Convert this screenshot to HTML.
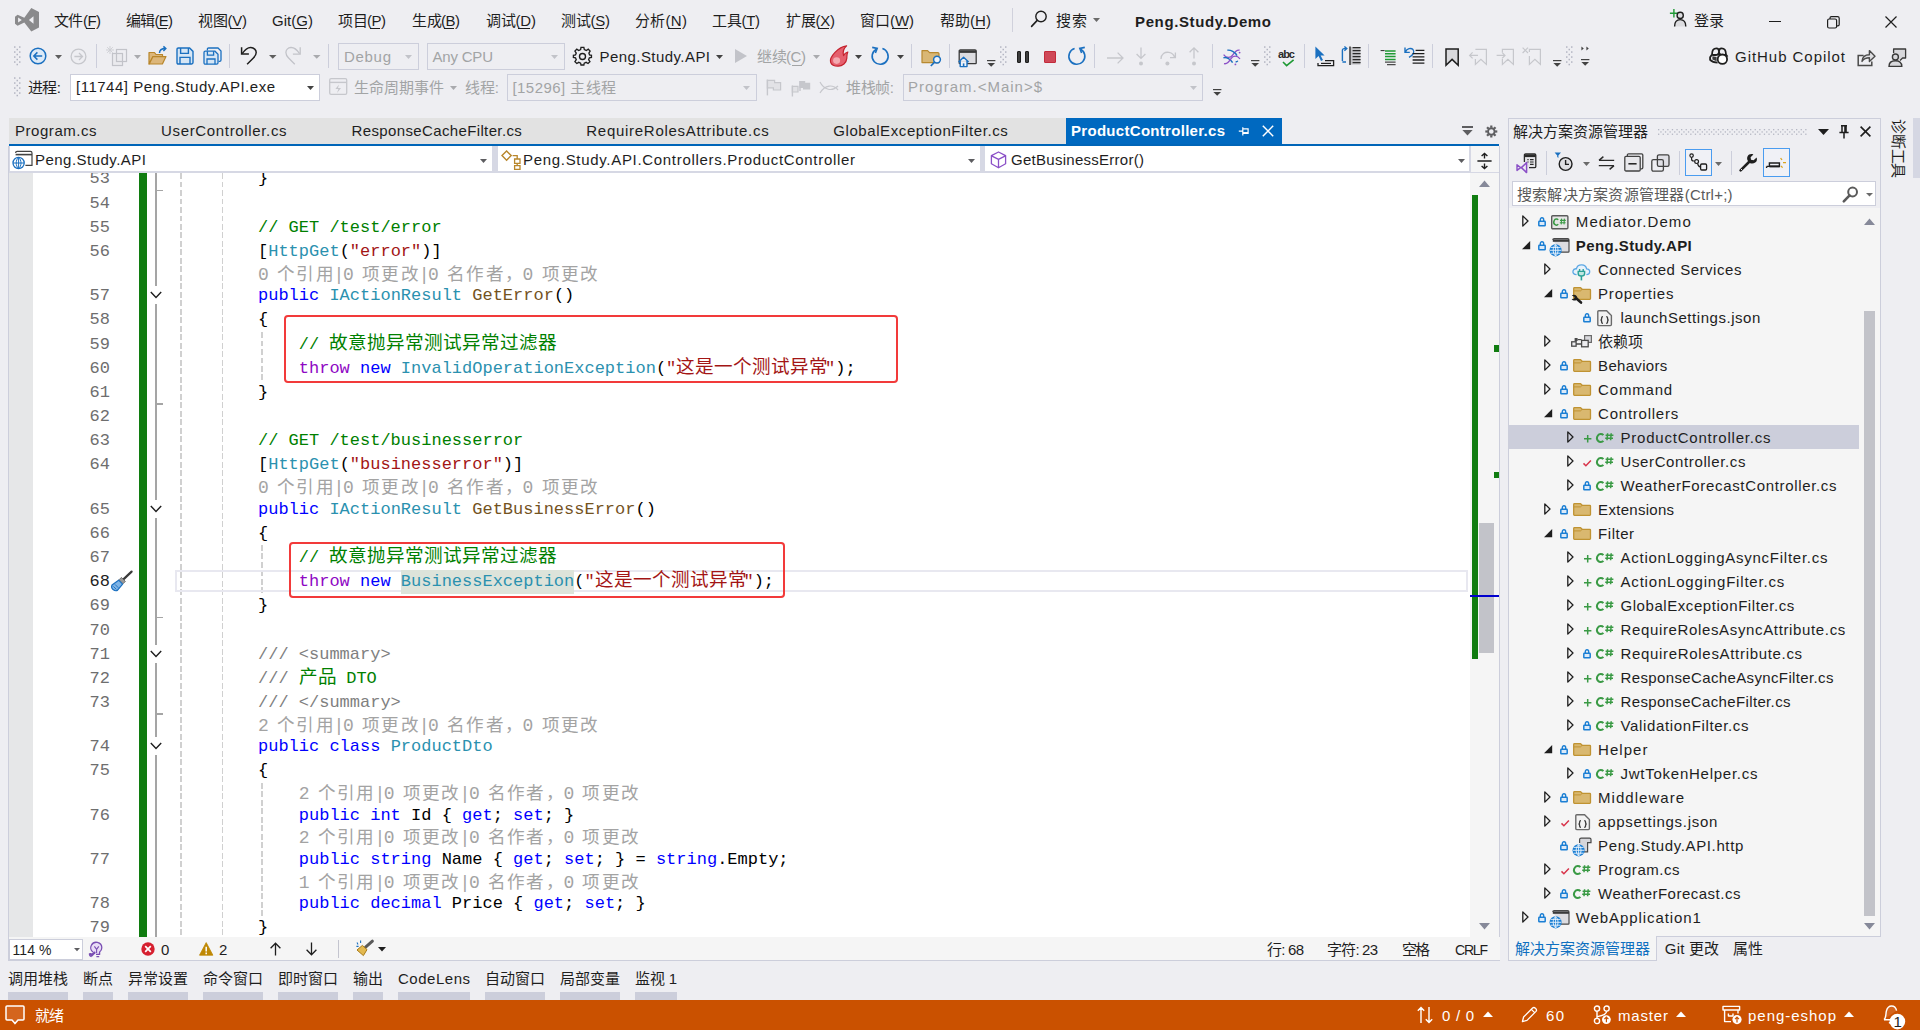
<!DOCTYPE html>
<html lang="zh-CN"><head><meta charset="utf-8"><title>Peng.Study.Demo - Microsoft Visual Studio</title>
<style>
html,body{margin:0;padding:0;}
body{width:1920px;height:1030px;overflow:hidden;background:#eeeef2;font-family:'Liberation Sans', sans-serif;font-size:15px;color:#1e1e1e;position:relative;}
.a{position:absolute;box-sizing:border-box;}
.t{white-space:pre;overflow:visible;}
svg{overflow:visible;}
.c{position:absolute;left:0;white-space:pre;font-family:'Liberation Mono', monospace;font-size:17px;line-height:24px;height:24px;color:#000;}
.c i{font-style:normal;display:inline-block;font-size:18.6px;line-height:20px;white-space:nowrap;overflow:visible;vertical-align:baseline;}
.cl{position:absolute;white-space:pre;font-family:'Liberation Mono', monospace;font-size:18px;letter-spacing:-1.35px;line-height:20px;height:20px;color:#a3a3a3;}
.cl i{font-style:normal;display:inline-block;font-family:'Liberation Serif',serif;font-size:17.6px;letter-spacing:1.3px;line-height:20px;white-space:nowrap;vertical-align:baseline;}
.k{color:#0000ff} .ty{color:#2b91af} .m{color:#74531f} .s{color:#a31515} .cm{color:#008000} .ck{color:#8f08c4} .x{color:#808080}
</style></head>
<body>
<svg class="a" style="left:15px;top:8px;" width="24" height="24" viewBox="0 0 24 24"><path d="M16.3 0.1 L24 4 V19.4 L16.3 23.6 L9.3 14.6 L2.6 17.7 L0 15.7 V8.8 L2.6 6.7 L9.3 9.7 Z M18.5 8.2 V15.8 L13.9 12 Z M3.1 9.6 V14.5 L6.8 12 Z" fill="#8a8a8c" fill-rule="evenodd"/></svg>
<span class="a t" id="t0" style="left:54px;top:11.0px;line-height:20px;font-size:15px;color:#1e1e1e;letter-spacing:-0.539px;width:51px;">文件(F)</span>
<span class="a t" id="t1" style="left:126px;top:11.0px;line-height:20px;font-size:15px;color:#1e1e1e;letter-spacing:-0.750px;width:51px;">编辑(E)</span>
<span class="a t" id="t2" style="left:198px;top:11.0px;line-height:20px;font-size:15px;color:#1e1e1e;letter-spacing:-0.250px;width:53px;">视图(V)</span>
<span class="a t" id="t3" style="left:272px;top:10.5px;line-height:20px;font-size:15px;color:#1e1e1e;letter-spacing:0.034px;width:45px;">Git(G)</span>
<span class="a t" id="t4" style="left:338px;top:11.0px;line-height:20px;font-size:15px;color:#1e1e1e;letter-spacing:-0.500px;width:52px;">项目(P)</span>
<span class="a t" id="t5" style="left:412px;top:11.0px;line-height:20px;font-size:15px;color:#1e1e1e;letter-spacing:-0.500px;width:52px;">生成(B)</span>
<span class="a t" id="t6" style="left:486px;top:11.0px;line-height:20px;font-size:15px;color:#1e1e1e;letter-spacing:-0.207px;width:54px;">调试(D)</span>
<span class="a t" id="t7" style="left:561px;top:11.0px;line-height:20px;font-size:15px;color:#1e1e1e;letter-spacing:-0.250px;width:53px;">测试(S)</span>
<span class="a t" id="t8" style="left:635px;top:11.0px;line-height:20px;font-size:15px;color:#1e1e1e;letter-spacing:0.293px;width:56px;">分析(N)</span>
<span class="a t" id="t9" style="left:712px;top:11.0px;line-height:20px;font-size:15px;color:#1e1e1e;letter-spacing:-0.289px;width:52px;">工具(T)</span>
<span class="a t" id="t10" style="left:786px;top:11.0px;line-height:20px;font-size:15px;color:#1e1e1e;letter-spacing:-0.250px;width:53px;">扩展(X)</span>
<span class="a t" id="t11" style="left:860px;top:11.0px;line-height:20px;font-size:15px;color:#1e1e1e;letter-spacing:-0.039px;width:58px;">窗口(W)</span>
<span class="a t" id="t12" style="left:940px;top:11.0px;line-height:20px;font-size:15px;color:#1e1e1e;letter-spacing:0.043px;width:55px;">帮助(H)</span>
<div class="a" style="left:86px;top:28px;width:9px;height:1px;background:#1e1e1e;"></div>
<div class="a" style="left:158px;top:28px;width:9px;height:1px;background:#1e1e1e;"></div>
<div class="a" style="left:230px;top:28px;width:11px;height:1px;background:#1e1e1e;"></div>
<div class="a" style="left:295px;top:28px;width:12px;height:1px;background:#1e1e1e;"></div>
<div class="a" style="left:370px;top:28px;width:10px;height:1px;background:#1e1e1e;"></div>
<div class="a" style="left:444px;top:28px;width:10px;height:1px;background:#1e1e1e;"></div>
<div class="a" style="left:518px;top:28px;width:12px;height:1px;background:#1e1e1e;"></div>
<div class="a" style="left:594px;top:28px;width:10px;height:1px;background:#1e1e1e;"></div>
<div class="a" style="left:668px;top:28px;width:13px;height:1px;background:#1e1e1e;"></div>
<div class="a" style="left:745px;top:28px;width:9px;height:1px;background:#1e1e1e;"></div>
<div class="a" style="left:818px;top:28px;width:11px;height:1px;background:#1e1e1e;"></div>
<div class="a" style="left:892px;top:28px;width:16px;height:1px;background:#1e1e1e;"></div>
<div class="a" style="left:973px;top:28px;width:12px;height:1px;background:#1e1e1e;"></div>
<div class="a" style="left:1012px;top:8px;width:1px;height:24px;background:#d0d1dc;"></div>
<svg class="a" style="left:1030px;top:10px;" width="18" height="18" viewBox="0 0 18 18"><circle cx="11" cy="6.5" r="5.2" fill="none" stroke="#1e1e1e" stroke-width="1.4"/><path d="M7.2 10.4 L1.6 16.4" stroke="#1e1e1e" stroke-width="1.6" stroke-linecap="round"/></svg>
<span class="a t" id="t13" style="left:1056px;top:11.0px;line-height:20px;font-size:15px;color:#1e1e1e;letter-spacing:1.000px;width:35px;">搜索</span>
<svg class="a" style="left:1093px;top:18px;" width="7" height="4" viewBox="0 0 7 4"><path d="M0 0H7L3.5 4Z" fill="#6a6a6a"/></svg>
<span class="a t" id="t14" style="left:1135px;top:11.7px;line-height:20px;font-size:15px;color:#1e1e1e;font-weight:bold;letter-spacing:0.625px;width:140px;">Peng.Study.Demo</span>
<svg class="a" style="left:1669px;top:8px;" width="20" height="20" viewBox="0 0 20 20"><path d="M4.9 1 V9.4 M0.9 5.2 H9" stroke="#1f9a35" stroke-width="1.4"/><circle cx="11.2" cy="7.4" r="3.1" fill="#dcdce0" stroke="#1e1e1e" stroke-width="1.4"/><path d="M5.6 18.4 C5.6 14 8 11.6 11.2 11.6 C14.4 11.6 16.8 14 16.8 18.4" fill="#dcdce0" stroke="#1e1e1e" stroke-width="1.4"/></svg>
<span class="a t" id="t15" style="left:1694px;top:11.0px;line-height:20px;font-size:15px;color:#1e1e1e;letter-spacing:0.000px;width:34px;">登录</span>
<div class="a" style="left:1769px;top:20.5px;width:12px;height:1.2px;background:#1e1e1e;"></div>
<svg class="a" style="left:1826.6px;top:15.6px;" width="13" height="13" viewBox="0 0 13 13"><rect x="0.6" y="3" width="9" height="9" rx="1.5" fill="none" stroke="#1e1e1e" stroke-width="1.2"/><path d="M3 3 V2 Q3 0.6 4.4 0.6 H10.6 Q12.2 0.6 12.2 2.2 V8.4 Q12.2 9.8 10.8 9.8 H9.8" fill="none" stroke="#1e1e1e" stroke-width="1.2"/></svg>
<svg class="a" style="left:1885px;top:16px;" width="12" height="12" viewBox="0 0 12 12"><path d="M0.5 0.5 L11.5 11.5 M11.5 0.5 L0.5 11.5" stroke="#1e1e1e" stroke-width="1.2"/></svg>
<svg class="a" style="left:14px;top:46px;" width="7" height="21" viewBox="0 0 7 21"><rect x="0" y="0.3" width="1.5" height="1.5" fill="#b3b5c2"/><rect x="5" y="0.3" width="1.5" height="1.5" fill="#b3b5c2"/><rect x="2.5" y="2.8" width="1.5" height="1.5" fill="#b3b5c2"/><rect x="0" y="5.3" width="1.5" height="1.5" fill="#b3b5c2"/><rect x="5" y="5.3" width="1.5" height="1.5" fill="#b3b5c2"/><rect x="2.5" y="7.8" width="1.5" height="1.5" fill="#b3b5c2"/><rect x="0" y="10.3" width="1.5" height="1.5" fill="#b3b5c2"/><rect x="5" y="10.3" width="1.5" height="1.5" fill="#b3b5c2"/><rect x="2.5" y="12.8" width="1.5" height="1.5" fill="#b3b5c2"/><rect x="0" y="15.3" width="1.5" height="1.5" fill="#b3b5c2"/><rect x="5" y="15.3" width="1.5" height="1.5" fill="#b3b5c2"/><rect x="2.5" y="17.8" width="1.5" height="1.5" fill="#b3b5c2"/></svg>
<svg class="a" style="left:29px;top:47px;" width="18" height="18" viewBox="0 0 18 18"><circle cx="9" cy="9" r="7.8" fill="#ddeaf7" stroke="#1b70c0" stroke-width="1.5"/><path d="M13.2 9 H5 M8.4 5.4 L4.8 9 L8.4 12.6" fill="none" stroke="#1b70c0" stroke-width="1.5"/></svg>
<svg class="a" style="left:55px;top:55px;" width="7" height="4" viewBox="0 0 7 4"><path d="M0 0H7L3.5 4Z" fill="#5e5e5e"/></svg>
<svg class="a" style="left:70px;top:48px;" width="17" height="17" viewBox="0 0 17 17"><circle cx="8.5" cy="8.5" r="7.4" fill="none" stroke="#c6c7cc" stroke-width="1.3"/><path d="M4.4 8.5 H12.2 M9 5 L12.5 8.5 L9 12" fill="none" stroke="#c6c7cc" stroke-width="1.3"/></svg>
<div class="a" style="left:96.3px;top:44px;width:1px;height:24px;background:#cccedb;"></div>
<svg class="a" style="left:106px;top:46px;" width="22" height="21" viewBox="0 0 22 21"><rect x="6.5" y="7.5" width="10" height="12" fill="#eaeaee" stroke="#c2c3c9" stroke-width="1.2"/><rect x="10.5" y="3.5" width="10" height="12" fill="none" stroke="#c2c3c9" stroke-width="1.2"/><path d="M4 0 V8 M0 4 H8 M1.2 1.2 L6.8 6.8 M6.8 1.2 L1.2 6.8" stroke="#cfd0d5" stroke-width="1"/></svg>
<svg class="a" style="left:134px;top:55px;" width="7" height="4" viewBox="0 0 7 4"><path d="M0 0H7L3.5 4Z" fill="#a9aaae"/></svg>
<svg class="a" style="left:148px;top:46px;" width="21" height="20" viewBox="0 0 21 20"><path d="M1 6.5 H6.5 L8 8.5 H14.5 V10.5 H5 L1 18 Z" fill="#dcb67a" stroke="#b8862b" stroke-width="1.2" stroke-linejoin="round"/><path d="M1.2 18 L5 10.6 H18 L14.4 18 Z" fill="#dcb67a" stroke="#b8862b" stroke-width="1.2" stroke-linejoin="round"/><path d="M11.5 7 C11.5 3.6 14 2.6 17.6 2.6 M15.4 0.4 L17.8 2.6 L15.4 5" fill="none" stroke="#1b70c0" stroke-width="1.5"/></svg>
<svg class="a" style="left:176px;top:47px;" width="18" height="18" viewBox="0 0 18 18"><path d="M1 2.4 Q1 1 2.4 1 H13.6 L17 4.4 V15.6 Q17 17 15.6 17 H2.4 Q1 17 1 15.6 Z" fill="#d6e6f5" stroke="#1b70c0" stroke-width="1.4"/><path d="M4.6 1 V6.4 H12.4 V1 M4 17 V10.4 H14 V17" fill="none" stroke="#1b70c0" stroke-width="1.4"/></svg>
<svg class="a" style="left:203px;top:47px;" width="19" height="18" viewBox="0 0 19 18"><path d="M4.4 3.4 V2.2 Q4.4 1 5.6 1 H15 L18 4 V13 Q18 14.4 16.6 14.4 H15.6" fill="none" stroke="#1b70c0" stroke-width="1.3"/><path d="M1 5.6 Q1 4.2 2.4 4.2 H12 L15 7.2 V15.8 Q15 17.2 13.6 17.2 H2.4 Q1 17.2 1 15.8 Z" fill="#d6e6f5" stroke="#1b70c0" stroke-width="1.3"/><path d="M4.4 4.2 V8.2 H10.6 V4.2 M4 17.2 V12 H12 V17.2" fill="none" stroke="#1b70c0" stroke-width="1.3"/></svg>
<div class="a" style="left:229.3px;top:44px;width:1px;height:24px;background:#cccedb;"></div>
<svg class="a" style="left:240px;top:46px;" width="19" height="19" viewBox="0 0 19 19"><path d="M1.6 1.3 V8.1 H8.9" fill="none" stroke="#1e1e1e" stroke-width="1.5"/><path d="M2.2 7.7 C5 3.5 8 1.4 10.8 1.5 C14 1.6 16.2 4 16.2 6.5 C16.2 8.6 15 10.4 13.4 12 L7.1 18.2" fill="none" stroke="#1e1e1e" stroke-width="1.5"/></svg>
<svg class="a" style="left:269px;top:55.1px;" width="7.5" height="3.8" viewBox="0 0 7.5 3.8"><path d="M0 0H7.5L3.75 3.8Z" fill="#5e5e5e"/></svg>
<svg class="a" style="left:285px;top:46px;" width="17" height="19" viewBox="0 0 17 19"><path d="M15.2 1.3 V8.1 H7.9" fill="none" stroke="#c2c3c9" stroke-width="1.3"/><path d="M14.6 7.7 C11.8 3.5 8.8 1.4 6 1.5 C2.8 1.6 0.9 4 0.9 6.5 C0.9 8.6 2 10.4 3.6 12 L9.8 18.2" fill="none" stroke="#c2c3c9" stroke-width="1.3"/></svg>
<svg class="a" style="left:312.5px;top:55.1px;" width="7.5" height="3.8" viewBox="0 0 7.5 3.8"><path d="M0 0H7.5L3.75 3.8Z" fill="#a9aaae"/></svg>
<div class="a" style="left:328.3px;top:44px;width:1px;height:24px;background:#cccedb;"></div>
<div class="a" style="left:338px;top:43px;width:81px;height:27px;border:1px solid #cccedb;"></div>
<span class="a t" id="t16" style="left:344px;top:46.6px;line-height:20px;font-size:15px;color:#a2a4a5;letter-spacing:0.699px;width:51px;">Debug</span>
<svg class="a" style="left:405px;top:55px;" width="7" height="4" viewBox="0 0 7 4"><path d="M0 0H7L3.5 4Z" fill="#c2c3c9"/></svg>
<div class="a" style="left:427px;top:43px;width:138px;height:27px;border:1px solid #cccedb;"></div>
<span class="a t" id="t17" style="left:432.5px;top:46.6px;line-height:20px;font-size:15px;color:#a2a4a5;letter-spacing:-0.198px;width:64.5px;">Any CPU</span>
<svg class="a" style="left:551px;top:55px;" width="7" height="4" viewBox="0 0 7 4"><path d="M0 0H7L3.5 4Z" fill="#c2c3c9"/></svg>
<svg class="a" style="left:573px;top:47px;" width="19" height="19" viewBox="0 0 19 19"><g fill="none" stroke="#1e1e1e" stroke-width="1.4"><circle cx="9.5" cy="9.5" r="3"/><path d="M8 1 H11 L11.5 3.4 L13.6 4.3 L15.6 2.9 L17.6 5 L16.3 7 L17 9 L19 9.4 V11.6 L16.8 12 L16 14 L17.4 16 L15.4 18 L13.4 16.8 L11.4 17.6 L11 19.6 H8 L7.6 17.6 L5.6 16.8 L3.6 18 L1.6 16 L3 14 L2.2 12 L0 11.6 V9.4 L2.2 9 L3 7 L1.6 5 L3.6 2.9 L5.6 4.3 L7.6 3.4 Z" transform="translate(0.4,-0.6) scale(0.95)"/></g></svg>
<span class="a t" id="t18" style="left:599.5px;top:46.6px;line-height:20px;font-size:15px;color:#1e1e1e;letter-spacing:0.439px;width:114.5px;">Peng.Study.API</span>
<svg class="a" style="left:716px;top:55px;" width="7" height="4" viewBox="0 0 7 4"><path d="M0 0H7L3.5 4Z" fill="#424242"/></svg>
<svg class="a" style="left:734px;top:48px;" width="14" height="16" viewBox="0 0 14 16"><path d="M1 1 L13 8 L1 15 Z" fill="#c2c3c9"/></svg>
<span class="a t" id="t19" style="left:757px;top:47.1px;line-height:20px;font-size:15px;color:#a2a4a5;letter-spacing:-0.457px;width:53px;">继续(C)</span>
<div class="a" style="left:792px;top:65px;width:10px;height:1px;background:#a2a4a5;"></div>
<svg class="a" style="left:813px;top:55px;" width="7" height="4" viewBox="0 0 7 4"><path d="M0 0H7L3.5 4Z" fill="#a9aaae"/></svg>
<svg class="a" style="left:829px;top:45px;" width="20" height="22" viewBox="0 0 20 22"><path d="M17.6 0.8 C13.5 1.2 9.5 3.6 6 7.4 C2.6 11 0.6 14 1.6 17.2 C2.6 20 5.6 21.2 9 21.2 C13.5 21.2 17.4 18 17.8 13.4 C18 11 17.6 9.6 18.8 7 C16.6 7.6 15.2 9 14.6 10.6 C13.6 7 14.6 3.4 17.6 0.8 Z" fill="#e5606e" stroke="#c4232f" stroke-width="1.2" stroke-linejoin="round"/><ellipse cx="7.6" cy="15.6" rx="3.5" ry="3.3" fill="#f4a9b0"/></svg>
<svg class="a" style="left:855px;top:55px;" width="7" height="4" viewBox="0 0 7 4"><path d="M0 0H7L3.5 4Z" fill="#424242"/></svg>
<svg class="a" style="left:870px;top:46px;" width="20" height="20" viewBox="0 0 20 20"><path d="M6.4 3.2 A8 8 0 1 0 12.4 2.6" fill="none" stroke="#1b70c0" stroke-width="1.6"/><path d="M2.2 1.4 L7.2 2.4 L5.4 7" fill="none" stroke="#1b70c0" stroke-width="1.6"/></svg>
<svg class="a" style="left:897px;top:55px;" width="7" height="4" viewBox="0 0 7 4"><path d="M0 0H7L3.5 4Z" fill="#424242"/></svg>
<div class="a" style="left:911.3px;top:44px;width:1px;height:24px;background:#cccedb;"></div>
<svg class="a" style="left:921px;top:48px;" width="22" height="20" viewBox="0 0 22 20"><path d="M1 2.6 H6.6 L8.6 4.6 H16.8 Q18 4.6 18 5.8 V14.6 H1 Z" fill="#d9b775" stroke="#b8892f" stroke-width="1.2" stroke-linejoin="round"/><circle cx="16" cy="11.6" r="3.4" fill="#eef3fa" stroke="#1b70c0" stroke-width="1.5"/><path d="M13.6 14.2 L9.8 18" stroke="#1b70c0" stroke-width="1.7"/></svg>
<div class="a" style="left:949.3px;top:44px;width:1px;height:24px;background:#cccedb;"></div>
<svg class="a" style="left:958px;top:49px;" width="20" height="19" viewBox="0 0 20 19"><path d="M1.2 14 V2 Q1.2 0.8 2.4 0.8 H17 Q18.2 0.8 18.2 2 V14 Q18.2 14.6 17.6 14.6 H1.8 Q1.2 14.6 1.2 14 Z" fill="#dcdce0" stroke="#3a3a3a" stroke-width="1.3"/><path d="M1.2 2.6 H18.2" stroke="#3a3a3a" stroke-width="2.6"/><path d="M0.6 13 L5.6 8.2 L10.6 13 M2.2 11.8 V17.6 H9 V11.8" fill="#eef3fa" stroke="#1b70c0" stroke-width="1.4" stroke-linejoin="round"/><path d="M5.6 17.4 V14.4" stroke="#1b70c0" stroke-width="1.6"/></svg>
<svg class="a" style="left:987px;top:59.5px;" width="9" height="7" viewBox="0 0 9 7"><path d="M0 0.6 H8.4" stroke="#424242" stroke-width="1.2"/><path d="M0.4 3 H8 L4.2 6.8 Z" fill="#424242"/></svg>
<svg class="a" style="left:1000px;top:46px;" width="7" height="21" viewBox="0 0 7 21"><rect x="0" y="0.3" width="1.5" height="1.5" fill="#b3b5c2"/><rect x="5" y="0.3" width="1.5" height="1.5" fill="#b3b5c2"/><rect x="2.5" y="2.8" width="1.5" height="1.5" fill="#b3b5c2"/><rect x="0" y="5.3" width="1.5" height="1.5" fill="#b3b5c2"/><rect x="5" y="5.3" width="1.5" height="1.5" fill="#b3b5c2"/><rect x="2.5" y="7.8" width="1.5" height="1.5" fill="#b3b5c2"/><rect x="0" y="10.3" width="1.5" height="1.5" fill="#b3b5c2"/><rect x="5" y="10.3" width="1.5" height="1.5" fill="#b3b5c2"/><rect x="2.5" y="12.8" width="1.5" height="1.5" fill="#b3b5c2"/><rect x="0" y="15.3" width="1.5" height="1.5" fill="#b3b5c2"/><rect x="5" y="15.3" width="1.5" height="1.5" fill="#b3b5c2"/><rect x="2.5" y="17.8" width="1.5" height="1.5" fill="#b3b5c2"/></svg>
<div class="a" style="left:1016.9px;top:50.5px;width:4.5px;height:12.6px;background:#3d3d3d;border:1px solid #1e1e1e;border-radius:1px;"></div>
<div class="a" style="left:1024.6px;top:50.5px;width:4.5px;height:12.6px;background:#3d3d3d;border:1px solid #1e1e1e;border-radius:1px;"></div>
<div class="a" style="left:1043.6px;top:50.5px;width:12.8px;height:12.6px;background:#cf4858;border:1px solid #c22b3b;border-radius:1px;"></div>
<svg class="a" style="left:1067px;top:46px;" width="20" height="20" viewBox="0 0 20 20"><path d="M13.6 3.2 A8 8 0 1 1 7.6 2.6" fill="none" stroke="#1b70c0" stroke-width="1.6"/><path d="M17.8 1.4 L12.8 2.4 L14.6 7" fill="none" stroke="#1b70c0" stroke-width="1.6"/></svg>
<div class="a" style="left:1094.3px;top:44px;width:1px;height:24px;background:#cccedb;"></div>
<svg class="a" style="left:1105.5px;top:49.8px;" width="19" height="16" viewBox="0 0 19 16"><path d="M1 8 H17 M11.6 2.6 L17 8 L11.6 13.4" fill="none" stroke="#c6c7cc" stroke-width="1.3"/></svg>
<svg class="a" style="left:1133.5px;top:47px;" width="14" height="20" viewBox="0 0 14 20"><path d="M7 0.6 V11 M2.6 7 L7 11.4 L11.4 7" fill="none" stroke="#c6c7cc" stroke-width="1.3"/><circle cx="7" cy="16.6" r="2" fill="#c6c7cc"/></svg>
<svg class="a" style="left:1158.5px;top:49px;" width="19" height="18" viewBox="0 0 19 18"><path d="M2 10 C2 5 6 2.6 10 3.4 C13 4 15 6 15.6 8.6 M11 8.6 H16.4 V3.4" fill="none" stroke="#c6c7cc" stroke-width="1.3"/><circle cx="8.4" cy="14.4" r="2" fill="#c6c7cc"/></svg>
<svg class="a" style="left:1187.3px;top:47.4px;" width="14" height="20" viewBox="0 0 14 20"><path d="M7 11.4 V1 M2.6 5.2 L7 0.8 L11.4 5.2" fill="none" stroke="#c6c7cc" stroke-width="1.3"/><circle cx="7" cy="16.6" r="2" fill="#c6c7cc"/></svg>
<div class="a" style="left:1212.3px;top:44px;width:1px;height:24px;background:#cccedb;"></div>
<svg class="a" style="left:1222px;top:48px;" width="20" height="18" viewBox="0 0 20 18"><path d="M1.6 6.6 C4.4 10.4 8.6 10.2 10.6 7.2 C12.4 4.4 14.6 1.4 17.6 2.2" fill="none" stroke="#8b50c7" stroke-width="1.3"/><path d="M5.4 2.2 C8.4 1.6 13.4 4.4 15 7.6" fill="none" stroke="#1b70c0" stroke-width="1.4"/><path d="M1.4 9.8 C4.4 8.6 9 11.6 10.6 14.6" fill="none" stroke="#1b70c0" stroke-width="1.4"/><path d="M2 15.6 C5 16.4 7.4 13.4 9 10.6 C11 7.4 15 7 18 10.8" fill="none" stroke="#8b50c7" stroke-width="1.3"/><path d="M13.6 13.6 C14.6 14 15.4 13.6 15.8 12.8" fill="none" stroke="#1b70c0" stroke-width="1.3"/><circle cx="17.6" cy="4.6" r="0.9" fill="#8b50c7"/><circle cx="13.4" cy="16.4" r="0.9" fill="#8b50c7"/></svg>
<svg class="a" style="left:1251px;top:59.5px;" width="9" height="7" viewBox="0 0 9 7"><path d="M0 0.6 H8.4" stroke="#424242" stroke-width="1.2"/><path d="M0.4 3 H8 L4.2 6.8 Z" fill="#424242"/></svg>
<svg class="a" style="left:1264px;top:46px;" width="7" height="21" viewBox="0 0 7 21"><rect x="0" y="0.3" width="1.5" height="1.5" fill="#b3b5c2"/><rect x="5" y="0.3" width="1.5" height="1.5" fill="#b3b5c2"/><rect x="2.5" y="2.8" width="1.5" height="1.5" fill="#b3b5c2"/><rect x="0" y="5.3" width="1.5" height="1.5" fill="#b3b5c2"/><rect x="5" y="5.3" width="1.5" height="1.5" fill="#b3b5c2"/><rect x="2.5" y="7.8" width="1.5" height="1.5" fill="#b3b5c2"/><rect x="0" y="10.3" width="1.5" height="1.5" fill="#b3b5c2"/><rect x="5" y="10.3" width="1.5" height="1.5" fill="#b3b5c2"/><rect x="2.5" y="12.8" width="1.5" height="1.5" fill="#b3b5c2"/><rect x="0" y="15.3" width="1.5" height="1.5" fill="#b3b5c2"/><rect x="5" y="15.3" width="1.5" height="1.5" fill="#b3b5c2"/><rect x="2.5" y="17.8" width="1.5" height="1.5" fill="#b3b5c2"/></svg>
<span class="a t" id="t20" style="left:1278px;top:47.8px;line-height:12px;font-size:11px;color:#2a2a2a;font-weight:bold;letter-spacing:-0.984px;width:21px;">abc</span>
<svg class="a" style="left:1281.5px;top:59px;" width="13" height="8" viewBox="0 0 13 8"><path d="M1 3 L4.6 6.6 L11.6 0.8" fill="none" stroke="#1f9a35" stroke-width="1.6"/></svg>
<div class="a" style="left:1304.3px;top:44px;width:1px;height:24px;background:#cccedb;"></div>
<svg class="a" style="left:1313px;top:46px;" width="22" height="21" viewBox="0 0 22 21"><path d="M2.4 0.6 V13 L5.6 10 L8 15 L10 14 L7.6 9.4 H11.6 Z" fill="#1b70c0"/><path d="M5 17 V19.6 H20.6 V14.6 H12" fill="none" stroke="#1e1e1e" stroke-width="1.3"/><path d="M8 17.4 H18" stroke="#1e1e1e" stroke-width="1.2"/></svg>
<svg class="a" style="left:1341px;top:46px;" width="21" height="21" viewBox="0 0 21 21"><path d="M1.4 15 V4.4 Q1.4 2.6 3.2 2.6 H5.4 M3.4 0.4 L5.8 2.6 L3.4 4.8 M1.4 16 H5" fill="none" stroke="#1b70c0" stroke-width="1.4"/><rect x="9.4" y="1" width="10" height="17.6" fill="#c4c4c8"/><path d="M9 0.6 V19 M11.6 1.6 H19.6 M11.6 4.6 H19.6 M11.6 7.6 H19.6 M11.6 10.6 H19.6 M11.6 13.6 H19.6 M11.6 16.6 H19.6" fill="none" stroke="#2a2a2a" stroke-width="1.4"/></svg>
<div class="a" style="left:1368.3px;top:44px;width:1px;height:24px;background:#cccedb;"></div>
<svg class="a" style="left:1380px;top:49px;" width="17" height="15" viewBox="0 0 17 15"><path d="M0.6 1.6 H4.6" stroke="#2a2a2a" stroke-width="1"/><path d="M5 2 H15.6 M5 4.8 H15.6 M5 7.6 H15.6 M5 10.4 H15.6" stroke="#1f9a35" stroke-width="1.5"/><path d="M5 13.2 H15.6 M7 15.6 H15.6" stroke="#4a4a4a" stroke-width="1.2"/></svg>
<svg class="a" style="left:1404px;top:46px;" width="21" height="19" viewBox="0 0 21 19"><path d="M1 1.6 V6.4 H5.8 M1.4 6 C3 2.4 7 1.6 9 3.6 C11 5.8 9.4 9 5 11.4" fill="none" stroke="#1b70c0" stroke-width="1.4"/><path d="M11.6 4.4 H20.4 M8.6 7.6 H20.4 M8.6 10.8 H20.4 M8.6 14 H20.4 M8.6 17.2 H20.4" stroke="#1e1e1e" stroke-width="1.3"/></svg>
<div class="a" style="left:1432.3px;top:44px;width:1px;height:24px;background:#cccedb;"></div>
<svg class="a" style="left:1445px;top:48px;" width="15" height="19" viewBox="0 0 15 19"><path d="M1 1 H13.2 V17.2 L7.1 11.4 L1 17.2 Z" fill="#d9d9dd" stroke="#1e1e1e" stroke-width="1.5"/></svg>
<svg class="a" style="left:1469px;top:48.2px;" width="19" height="18" viewBox="0 0 19 18"><path d="M6.4 1.4 H17.4 V16.4 L11.9 11.4 L6.4 16.4 V11 M0.6 7.4 H9 M3.6 4.4 L0.6 7.4 L3.6 10.4" fill="none" stroke="#c6c7cc" stroke-width="1.2"/></svg>
<svg class="a" style="left:1496px;top:48.2px;" width="19" height="18" viewBox="0 0 19 18"><path d="M6.4 4 V1.4 H17.4 V16.4 L11.9 11.4 L6.4 16.4 V11 M0.6 7.4 H9 M6 4.4 L9 7.4 L6 10.4" fill="none" stroke="#c6c7cc" stroke-width="1.2"/></svg>
<svg class="a" style="left:1522px;top:47.2px;" width="20" height="19" viewBox="0 0 20 19"><path d="M7.4 5 V2.4 H18.4 V17.4 L12.9 12.4 L7.4 17.4 V9" fill="none" stroke="#c6c7cc" stroke-width="1.2"/><path d="M0.6 0.6 L6 6 M6 0.6 L0.6 6" stroke="#c6c7cc" stroke-width="1.2"/></svg>
<svg class="a" style="left:1552.7px;top:59.5px;" width="9" height="7" viewBox="0 0 9 7"><path d="M0 0.6 H8.4" stroke="#424242" stroke-width="1.2"/><path d="M0.4 3 H8 L4.2 6.8 Z" fill="#424242"/></svg>
<svg class="a" style="left:1565.6px;top:46px;" width="7" height="21" viewBox="0 0 7 21"><rect x="0" y="0.3" width="1.5" height="1.5" fill="#b3b5c2"/><rect x="5" y="0.3" width="1.5" height="1.5" fill="#b3b5c2"/><rect x="2.5" y="2.8" width="1.5" height="1.5" fill="#b3b5c2"/><rect x="0" y="5.3" width="1.5" height="1.5" fill="#b3b5c2"/><rect x="5" y="5.3" width="1.5" height="1.5" fill="#b3b5c2"/><rect x="2.5" y="7.8" width="1.5" height="1.5" fill="#b3b5c2"/><rect x="0" y="10.3" width="1.5" height="1.5" fill="#b3b5c2"/><rect x="5" y="10.3" width="1.5" height="1.5" fill="#b3b5c2"/><rect x="2.5" y="12.8" width="1.5" height="1.5" fill="#b3b5c2"/><rect x="0" y="15.3" width="1.5" height="1.5" fill="#b3b5c2"/><rect x="5" y="15.3" width="1.5" height="1.5" fill="#b3b5c2"/><rect x="2.5" y="17.8" width="1.5" height="1.5" fill="#b3b5c2"/></svg>
<svg class="a" style="left:1581px;top:46px;" width="9" height="20" viewBox="0 0 9 20"><path d="M0.4 0.6 L2.8 2.6 L0.4 4.6 Z M5.4 0.6 L7.8 2.6 L5.4 4.6 Z" fill="#424242"/><path d="M0 13.6 H8.4" stroke="#424242" stroke-width="1.2"/><path d="M0.4 16 H8 L4.2 19.8 Z" fill="#424242"/></svg>
<svg class="a" style="left:1709px;top:47.4px;" width="20" height="19" viewBox="0 0 20 19"><path d="M3 7.4 C3 3 4.6 1.4 7.4 1.4 C9.4 1.4 10 2.6 10 4.4 C10 7 8.6 8 6.4 8 C4.6 8 3 8 3 7.4 Z M17 7.4 C17 3 15.4 1.4 12.6 1.4 C10.6 1.4 10 2.6 10 4.4 C10 7 11.4 8 13.6 8 C15.4 8 17 8 17 7.4 Z" fill="none" stroke="#1e1e1e" stroke-width="1.8"/><path d="M2.8 7.8 L1.1 10.2 V12.8 C2.8 14.6 5.2 15.5 8.6 15.6" fill="none" stroke="#1e1e1e" stroke-width="1.8"/><path d="M3.4 9.2 V12.6 L7.6 14.2 V10" fill="#3a3a3a"/><path d="M17.2 7.6 L18.6 9.6" fill="none" stroke="#1e1e1e" stroke-width="1.6"/><circle cx="13.4" cy="12.2" r="4.7" fill="#ffffff" stroke="#1e1e1e" stroke-width="1.8"/></svg>
<span class="a t" id="t21" style="left:1735px;top:46.7px;line-height:20px;font-size:15px;color:#1e1e1e;letter-spacing:0.958px;width:114px;">GitHub Copilot</span>
<svg class="a" style="left:1856.6px;top:49px;" width="19" height="18" viewBox="0 0 19 18"><path d="M6.6 6.4 H1.2 V16.4 H14.8 V12.4" fill="none" stroke="#4a4a4a" stroke-width="1.5"/><path d="M5 12.4 C5.4 7.8 8.4 5.8 12.4 5.8 V1.6 L18 7.2 L12.4 12.4 V8.8 C9.4 8.8 7 9.4 5 12.4 Z" fill="#e0e0e4" stroke="#4a4a4a" stroke-width="1.4" stroke-linejoin="round"/></svg>
<svg class="a" style="left:1888px;top:47.6px;" width="19" height="19" viewBox="0 0 19 19"><path d="M5.6 5 V1 H17.6 V10 H14.6 L12 12.4" fill="#d8d8dc" stroke="#3a3a3a" stroke-width="1.3" stroke-linejoin="round"/><circle cx="7.4" cy="9" r="3" fill="#d8d8dc" stroke="#3a3a3a" stroke-width="1.4"/><path d="M1 18.4 C1 14.4 3.8 12.8 7.4 12.8 C11 12.8 13.8 14.4 13.8 18.4 Z" fill="#d8d8dc" stroke="#3a3a3a" stroke-width="1.4"/></svg>
<svg class="a" style="left:14px;top:77px;" width="7" height="21" viewBox="0 0 7 21"><rect x="0" y="0.3" width="1.5" height="1.5" fill="#b3b5c2"/><rect x="5" y="0.3" width="1.5" height="1.5" fill="#b3b5c2"/><rect x="2.5" y="2.8" width="1.5" height="1.5" fill="#b3b5c2"/><rect x="0" y="5.3" width="1.5" height="1.5" fill="#b3b5c2"/><rect x="5" y="5.3" width="1.5" height="1.5" fill="#b3b5c2"/><rect x="2.5" y="7.8" width="1.5" height="1.5" fill="#b3b5c2"/><rect x="0" y="10.3" width="1.5" height="1.5" fill="#b3b5c2"/><rect x="5" y="10.3" width="1.5" height="1.5" fill="#b3b5c2"/><rect x="2.5" y="12.8" width="1.5" height="1.5" fill="#b3b5c2"/><rect x="0" y="15.3" width="1.5" height="1.5" fill="#b3b5c2"/><rect x="5" y="15.3" width="1.5" height="1.5" fill="#b3b5c2"/><rect x="2.5" y="17.8" width="1.5" height="1.5" fill="#b3b5c2"/></svg>
<span class="a t" id="t22" style="left:28px;top:77.9px;line-height:20px;font-size:15px;color:#1e1e1e;letter-spacing:-0.586px;width:37px;">进程:</span>
<div class="a" style="left:70px;top:74px;width:250px;height:27px;background:#ffffff;border:1px solid #cccedb;"></div>
<span class="a t" id="t23" style="left:76px;top:77.4px;line-height:20px;font-size:15px;color:#1e1e1e;letter-spacing:0.510px;width:203px;">[11744] Peng.Study.API.exe</span>
<svg class="a" style="left:307px;top:86px;" width="7" height="4" viewBox="0 0 7 4"><path d="M0 0H7L3.5 4Z" fill="#424242"/></svg>
<svg class="a" style="left:329px;top:78px;" width="19" height="18" viewBox="0 0 19 18"><rect x="0.7" y="0.7" width="17" height="15.6" rx="1.4" fill="none" stroke="#c6c7cc" stroke-width="1.3"/><path d="M0.7 4.4 H17.7" stroke="#c6c7cc" stroke-width="1.4"/><path d="M10 6.4 L6.4 11 H9.4 L8 15 L12 10 H9 Z" fill="#c6c7cc"/></svg>
<span class="a t" id="t24" style="left:354px;top:77.9px;line-height:20px;font-size:15px;color:#a2a4a5;letter-spacing:0.000px;width:94px;">生命周期事件</span>
<svg class="a" style="left:450px;top:86px;" width="7" height="4" viewBox="0 0 7 4"><path d="M0 0H7L3.5 4Z" fill="#a9aaae"/></svg>
<span class="a t" id="t25" style="left:465px;top:77.9px;line-height:20px;font-size:15px;color:#a2a4a5;letter-spacing:-0.086px;width:38px;">线程:</span>
<div class="a" style="left:507px;top:74px;width:250px;height:27px;border:1px solid #cccedb;"></div>
<span class="a t" id="t26" style="left:512.5px;top:77.9px;line-height:20px;font-size:15px;color:#a2a4a5;letter-spacing:0.428px;width:107.5px;">[15296] 主线程</span>
<svg class="a" style="left:743px;top:86px;" width="7" height="4" viewBox="0 0 7 4"><path d="M0 0H7L3.5 4Z" fill="#c2c3c9"/></svg>
<svg class="a" style="left:766px;top:79px;" width="16" height="17" viewBox="0 0 16 17"><path d="M1.4 1.4 H8.6 V3.6 H14.6 V11 H7.4 V8.8 H1.4 Z" fill="#e2e2e6" stroke="#c6c7cc" stroke-width="1.2"/><path d="M1.4 0.6 V16.4" stroke="#c6c7cc" stroke-width="1.4"/></svg>
<svg class="a" style="left:791px;top:79px;" width="20" height="18" viewBox="0 0 20 18"><path d="M9 2.6 H13.6 V4.4 H18.6 V10 H12.6 V8.4 H9 Z" fill="#c6c7cc" stroke="#c6c7cc" stroke-width="1.2"/><path d="M1.4 7.4 H7 V13 H1.4 Z" fill="#e2e2e6" stroke="#c6c7cc" stroke-width="1.2"/><path d="M1.4 6.6 V17.4 M9 2 V12" stroke="#c6c7cc" stroke-width="1.4"/></svg>
<svg class="a" style="left:819px;top:80px;" width="20" height="15" viewBox="0 0 20 15"><path d="M1 2 C5 10 13 12 19 6 M1 13 C6 4.6 14 4 19 10" fill="none" stroke="#c6c7cc" stroke-width="1.2"/></svg>
<span class="a t" id="t27" style="left:846px;top:77.9px;line-height:20px;font-size:15px;color:#a2a4a5;letter-spacing:-0.391px;width:52px;">堆栈帧:</span>
<div class="a" style="left:903px;top:74px;width:300px;height:27px;border:1px solid #cccedb;"></div>
<span class="a t" id="t28" style="left:908px;top:77.4px;line-height:20px;font-size:15px;color:#a2a4a5;letter-spacing:0.996px;width:138px;">Program.&lt;Main&gt;$</span>
<svg class="a" style="left:1190px;top:86px;" width="7" height="4" viewBox="0 0 7 4"><path d="M0 0H7L3.5 4Z" fill="#c2c3c9"/></svg>
<svg class="a" style="left:1213px;top:89px;" width="9" height="7" viewBox="0 0 9 7"><path d="M0 0.6 H8.4" stroke="#424242" stroke-width="1.2"/><path d="M0.4 3 H8 L4.2 6.8 Z" fill="#424242"/></svg>
<div class="a" style="left:9px;top:117.8px;width:1057px;height:26.2px;background:#e2e2e2;"></div>
<span class="a t" id="t29" style="left:15px;top:120.7px;line-height:20px;font-size:15px;color:#1e1e1e;letter-spacing:0.546px;width:85.6px;">Program.cs</span>
<span class="a t" id="t30" style="left:161px;top:120.7px;line-height:20px;font-size:15px;color:#1e1e1e;letter-spacing:0.660px;width:129.6px;">UserController.cs</span>
<span class="a t" id="t31" style="left:351.5px;top:120.7px;line-height:20px;font-size:15px;color:#1e1e1e;letter-spacing:0.368px;width:174.3px;">ResponseCacheFilter.cs</span>
<span class="a t" id="t32" style="left:586.3px;top:120.7px;line-height:20px;font-size:15px;color:#1e1e1e;letter-spacing:0.716px;width:186.4px;">RequireRolesAttribute.cs</span>
<span class="a t" id="t33" style="left:833.2px;top:120.7px;line-height:20px;font-size:15px;color:#1e1e1e;letter-spacing:0.595px;width:178.6px;">GlobalExceptionFilter.cs</span>
<div class="a" style="left:1065.9px;top:117.8px;width:216.1px;height:27px;background:#0069c0;"></div>
<span class="a t" id="t34" style="left:1071px;top:121.0px;line-height:20px;font-size:15px;color:#ffffff;font-weight:bold;letter-spacing:0.297px;width:158px;">ProductController.cs</span>
<svg class="a" style="left:1239px;top:126px;" width="11" height="11" viewBox="0 0 11 11"><path d="M-0.2 5.2 H3.8 M3.8 1.3 V9.5 M3.8 2.9 H9.1 V7.4 H3.8" fill="none" stroke="#fff" stroke-width="1.2"/><path d="M3.8 7 H9.1" stroke="#fff" stroke-width="1.9"/></svg>
<svg class="a" style="left:1262px;top:125px;" width="12" height="12" viewBox="0 0 12 12"><path d="M0.8 0.8 L11.2 11.2 M11.2 0.8 L0.8 11.2" stroke="#fff" stroke-width="1.5"/></svg>
<div class="a" style="left:9px;top:143.9px;width:1490px;height:2.3px;background:#0065b8;"></div>
<svg class="a" style="left:1462px;top:126px;" width="11" height="10" viewBox="0 0 11 10"><path d="M0 1 H11" stroke="#5d5d60" stroke-width="2"/><path d="M0.4 4 H10.6 L5.5 9.6 Z" fill="#5d5d60"/></svg>
<svg class="a" style="left:1485px;top:125px;" width="13" height="13" viewBox="0 0 13 13"><g transform="translate(6.3,6.5)"><circle r="3.3" fill="none" stroke="#5d5d60" stroke-width="1.9"/><rect x="-1.1" y="-6" width="2.2" height="2.2" fill="#5d5d60" transform="rotate(0)"/><rect x="-1.1" y="-6" width="2.2" height="2.2" fill="#5d5d60" transform="rotate(45)"/><rect x="-1.1" y="-6" width="2.2" height="2.2" fill="#5d5d60" transform="rotate(90)"/><rect x="-1.1" y="-6" width="2.2" height="2.2" fill="#5d5d60" transform="rotate(135)"/><rect x="-1.1" y="-6" width="2.2" height="2.2" fill="#5d5d60" transform="rotate(180)"/><rect x="-1.1" y="-6" width="2.2" height="2.2" fill="#5d5d60" transform="rotate(225)"/><rect x="-1.1" y="-6" width="2.2" height="2.2" fill="#5d5d60" transform="rotate(270)"/><rect x="-1.1" y="-6" width="2.2" height="2.2" fill="#5d5d60" transform="rotate(315)"/></g></svg>
<div class="a" style="left:9px;top:146px;width:1490px;height:27px;background:#d6d8e4;"></div>
<div class="a" style="left:10px;top:146px;width:482px;height:25.3px;background:#ffffff;"></div>
<div class="a" style="left:497.7px;top:146px;width:482px;height:25.3px;background:#ffffff;"></div>
<div class="a" style="left:985.4px;top:146px;width:484.1px;height:25.3px;background:#ffffff;"></div>
<div class="a" style="left:1470.5px;top:146px;width:28px;height:26px;background:#f5f5f5;"></div>
<svg class="a" style="left:11px;top:150px;" width="22" height="20" viewBox="0 0 22 20"><path d="M4.6 3 Q4.6 1.4 6.2 1.4 H19.4 Q21 1.4 21 3 V15.4 H14.4" fill="none" stroke="#424242" stroke-width="1.2"/><path d="M4.6 4.6 H21" stroke="#424242" stroke-width="1.6"/><circle cx="7.6" cy="13" r="5.6" fill="#fff" stroke="#1b70c0" stroke-width="1.3"/><path d="M2 13 H13.2 M7.6 7.4 V18.6 M7.6 7.4 C4.4 10 4.4 16 7.6 18.6 M7.6 7.4 C10.8 10 10.8 16 7.6 18.6" fill="none" stroke="#1b70c0" stroke-width="1"/></svg>
<span class="a t" id="t35" style="left:35px;top:150.0px;line-height:20px;font-size:15px;color:#1e1e1e;letter-spacing:0.477px;width:115px;">Peng.Study.API</span>
<svg class="a" style="left:479.5px;top:159px;" width="7" height="4" viewBox="0 0 7 4"><path d="M0 0H7L3.5 4Z" fill="#5d5d60"/></svg>
<svg class="a" style="left:501px;top:150px;" width="21" height="20" viewBox="0 0 21 20"><path d="M5.6 1 L10.2 5.6 L5.6 10.2 L1 5.6 Z" fill="none" stroke="#b8862b" stroke-width="1.4"/><path d="M10 5.6 H14.6 V9 M12 9 H17.4 V13.4 H12 Z M14.6 13.4 V15.6 M12 15.6 H17.4 V19.4 H12 Z" fill="none" stroke="#b8862b" stroke-width="1.3" transform="translate(1.6,0)"/></svg>
<span class="a t" id="t36" style="left:523px;top:150.0px;line-height:20px;font-size:15px;color:#1e1e1e;letter-spacing:0.689px;width:336px;">Peng.Study.API.Controllers.ProductController</span>
<svg class="a" style="left:967.5px;top:159px;" width="7" height="4" viewBox="0 0 7 4"><path d="M0 0H7L3.5 4Z" fill="#5d5d60"/></svg>
<svg class="a" style="left:990px;top:151px;" width="17" height="18" viewBox="0 0 17 18"><path d="M8.5 1 L15.6 4.6 V12.8 L8.5 16.8 L1.4 12.8 V4.6 Z M1.6 4.8 L8.5 8.4 L15.4 4.8 M8.5 8.4 V16.6" fill="none" stroke="#8b50c7" stroke-width="1.3" stroke-linejoin="round"/></svg>
<span class="a t" id="t37" style="left:1011px;top:150.0px;line-height:20px;font-size:15px;color:#1e1e1e;letter-spacing:0.272px;width:137px;">GetBusinessError()</span>
<svg class="a" style="left:1458px;top:159px;" width="7" height="4" viewBox="0 0 7 4"><path d="M0 0H7L3.5 4Z" fill="#5d5d60"/></svg>
<svg class="a" style="left:1477px;top:152.5px;" width="15" height="16" viewBox="0 0 15 16"><path d="M0.4 8 H14.6" stroke="#1e1e1e" stroke-width="1.5"/><path d="M7.5 0.6 V5.6 M7.5 15.4 V10.4 M4.6 3 L7.5 0.4 L10.4 3 M4.6 13 L7.5 15.6 L10.4 13" fill="none" stroke="#1e1e1e" stroke-width="1.4"/></svg>
<div class="a" style="left:9px;top:172.8px;width:1490px;height:764.2px;background:#fff;overflow:hidden;">
<div class="a" style="left:0px;top:0.0px;width:23.8px;height:764.2px;background:#e6e7e8;"></div>
<div class="a" style="left:130px;top:0.0px;width:8px;height:764.2px;background:#107c10;"></div>
<div class="a" style="left:171.4px;top:0.0px;width:1.7px;height:764.2px;background:repeating-linear-gradient(to bottom,#d0d0d0 0,#d0d0d0 5.6px,transparent 5.6px,transparent 8.5px);"></div>
<div class="a" style="left:212.6px;top:0.0px;width:1.7px;height:764.2px;background:repeating-linear-gradient(to bottom,#d0d0d0 0,#d0d0d0 5.6px,transparent 5.6px,transparent 8.5px);"></div>
<div class="a" style="left:252.4px;top:158.87px;width:1.7px;height:48.339999999999975px;background:repeating-linear-gradient(to bottom,#d0d0d0 0,#d0d0d0 5.6px,transparent 5.6px,transparent 8.5px);"></div>
<div class="a" style="left:252.4px;top:372.33px;width:1.7px;height:48.34000000000003px;background:repeating-linear-gradient(to bottom,#d0d0d0 0,#d0d0d0 5.6px,transparent 5.6px,transparent 8.5px);"></div>
<div class="a" style="left:252.4px;top:609.95px;width:1.7px;height:132.80999999999995px;background:repeating-linear-gradient(to bottom,#d0d0d0 0,#d0d0d0 5.6px,transparent 5.6px,transparent 8.5px);"></div>
<div class="a" style="left:146px;top:0.0px;width:2px;height:764.2px;background:#a5a5a5;"></div>
<div class="a" style="left:146px;top:17.0px;width:8px;height:1.5px;background:#a5a5a5;"></div>
<div class="a" style="left:146px;top:230.5px;width:8px;height:1.5px;background:#a5a5a5;"></div>
<div class="a" style="left:146px;top:443.9px;width:8px;height:1.5px;background:#a5a5a5;"></div>
<div class="a" style="left:146px;top:540.6px;width:8px;height:1.5px;background:#a5a5a5;"></div>
<div class="a" style="left:140px;top:113.61px;width:14px;height:18px;background:#fff;"></div>
<svg class="a" style="left:141px;top:118.61px" width="12" height="8" viewBox="0 0 12 8"><path d="M0.8 1 L6 6.4 L11.2 1" fill="none" stroke="#1e1e1e" stroke-width="1.4"/></svg>
<div class="a" style="left:140px;top:327.07px;width:14px;height:18px;background:#fff;"></div>
<svg class="a" style="left:141px;top:332.07px" width="12" height="8" viewBox="0 0 12 8"><path d="M0.8 1 L6 6.4 L11.2 1" fill="none" stroke="#1e1e1e" stroke-width="1.4"/></svg>
<div class="a" style="left:140px;top:472.09px;width:14px;height:18px;background:#fff;"></div>
<svg class="a" style="left:141px;top:477.09px" width="12" height="8" viewBox="0 0 12 8"><path d="M0.8 1 L6 6.4 L11.2 1" fill="none" stroke="#1e1e1e" stroke-width="1.4"/></svg>
<div class="a" style="left:140px;top:564.7px;width:14px;height:18px;background:#fff;"></div>
<svg class="a" style="left:141px;top:569.7px" width="12" height="8" viewBox="0 0 12 8"><path d="M0.8 1 L6 6.4 L11.2 1" fill="none" stroke="#1e1e1e" stroke-width="1.4"/></svg>
<div class="a" style="left:166px;top:397.58px;width:1293px;height:22px;border:2px solid #e8e8f0;"></div>
<div class="a" style="left:392px;top:397.58px;width:173px;height:23.5px;background:#dde3da;"></div>
<span class="c" style="left:80.6px;top:-5.37px;color:#6e6e6e">53</span>
<span class="c" style="left:249.0px;top:-5.37px">}</span>
<span class="c" style="left:80.6px;top:18.8px;color:#6e6e6e">54</span>
<span class="c" style="left:80.6px;top:42.97px;color:#6e6e6e">55</span>
<span class="c" style="left:249.0px;top:42.97px"><span class="cm">// GET /test/error</span></span>
<span class="c" style="left:80.6px;top:67.14px;color:#6e6e6e">56</span>
<span class="c" style="left:249.0px;top:67.14px">[<span class="ty">HttpGet</span>(<span class="s">"error"</span>)]</span>
<span class="cl" style="left:249.0px;top:90.88px">0 <i style="width:56.7px">个引用</i>|0 <i style="width:56.7px">项更改</i>|0 <i style="width:75.6px">名作者，</i>0 <i style="width:56.7px">项更改</i></span>
<span class="c" style="left:80.6px;top:111.41px;color:#6e6e6e">57</span>
<span class="c" style="left:249.0px;top:111.41px"><span class="k">public</span> <span class="ty">IActionResult</span> <span class="m">GetError</span>()</span>
<span class="c" style="left:80.6px;top:135.58px;color:#6e6e6e">58</span>
<span class="c" style="left:249.0px;top:135.58px">{</span>
<span class="c" style="left:80.6px;top:159.75px;color:#6e6e6e">59</span>
<span class="c" style="left:289.8px;top:159.75px"><span class="cm">// </span><i class="cm" style="width:223.2px">故意抛异常测试异常过滤器</i></span>
<span class="c" style="left:80.6px;top:183.92px;color:#6e6e6e">60</span>
<span class="c" style="left:289.8px;top:183.92px"><span class="ck">throw</span> <span class="k">new</span> <span class="ty">InvalidOperationException</span>(<span class="s">"</span><i class="s" style="width:148.8px">这是一个测试异常</i><span class="s">"</span>);</span>
<span class="c" style="left:80.6px;top:208.09px;color:#6e6e6e">61</span>
<span class="c" style="left:249.0px;top:208.09px">}</span>
<span class="c" style="left:80.6px;top:232.26px;color:#6e6e6e">62</span>
<span class="c" style="left:80.6px;top:256.43px;color:#6e6e6e">63</span>
<span class="c" style="left:249.0px;top:256.43px"><span class="cm">// GET /test/businesserror</span></span>
<span class="c" style="left:80.6px;top:280.6px;color:#6e6e6e">64</span>
<span class="c" style="left:249.0px;top:280.6px">[<span class="ty">HttpGet</span>(<span class="s">"businesserror"</span>)]</span>
<span class="cl" style="left:249.0px;top:304.34px">0 <i style="width:56.7px">个引用</i>|0 <i style="width:56.7px">项更改</i>|0 <i style="width:75.6px">名作者，</i>0 <i style="width:56.7px">项更改</i></span>
<span class="c" style="left:80.6px;top:324.87px;color:#6e6e6e">65</span>
<span class="c" style="left:249.0px;top:324.87px"><span class="k">public</span> <span class="ty">IActionResult</span> <span class="m">GetBusinessError</span>()</span>
<span class="c" style="left:80.6px;top:349.04px;color:#6e6e6e">66</span>
<span class="c" style="left:249.0px;top:349.04px">{</span>
<span class="c" style="left:80.6px;top:373.21px;color:#6e6e6e">67</span>
<span class="c" style="left:289.8px;top:373.21px"><span class="cm">// </span><i class="cm" style="width:223.2px">故意抛异常测试异常过滤器</i></span>
<span class="c" style="left:80.6px;top:397.38px;color:#1e1e1e">68</span>
<span class="c" style="left:289.8px;top:397.38px"><span class="ck">throw</span> <span class="k">new</span> <span class="ty">BusinessException</span>(<span class="s">"</span><i class="s" style="width:148.8px">这是一个测试异常</i><span class="s">"</span>);</span>
<span class="c" style="left:80.6px;top:421.55px;color:#6e6e6e">69</span>
<span class="c" style="left:249.0px;top:421.55px">}</span>
<span class="c" style="left:80.6px;top:445.72px;color:#6e6e6e">70</span>
<span class="c" style="left:80.6px;top:469.89px;color:#6e6e6e">71</span>
<span class="c" style="left:249.0px;top:469.89px"><span class="x">/// &lt;summary&gt;</span></span>
<span class="c" style="left:80.6px;top:494.06px;color:#6e6e6e">72</span>
<span class="c" style="left:249.0px;top:494.06px"><span class="x">/// </span><i class="cm" style="width:37.2px">产品</i><span class="cm"> DTO</span></span>
<span class="c" style="left:80.6px;top:518.23px;color:#6e6e6e">73</span>
<span class="c" style="left:249.0px;top:518.23px"><span class="x">/// &lt;/summary&gt;</span></span>
<span class="cl" style="left:249.0px;top:541.96px">2 <i style="width:56.7px">个引用</i>|0 <i style="width:56.7px">项更改</i>|0 <i style="width:75.6px">名作者，</i>0 <i style="width:56.7px">项更改</i></span>
<span class="c" style="left:80.6px;top:562.5px;color:#6e6e6e">74</span>
<span class="c" style="left:249.0px;top:562.5px"><span class="k">public</span> <span class="k">class</span> <span class="ty">ProductDto</span></span>
<span class="c" style="left:80.6px;top:586.67px;color:#6e6e6e">75</span>
<span class="c" style="left:249.0px;top:586.67px">{</span>
<span class="cl" style="left:289.8px;top:610.4px">2 <i style="width:56.7px">个引用</i>|0 <i style="width:56.7px">项更改</i>|0 <i style="width:75.6px">名作者，</i>0 <i style="width:56.7px">项更改</i></span>
<span class="c" style="left:80.6px;top:630.94px;color:#6e6e6e">76</span>
<span class="c" style="left:289.8px;top:630.94px"><span class="k">public</span> <span class="k">int</span> Id { <span class="k">get</span>; <span class="k">set</span>; }</span>
<span class="cl" style="left:289.8px;top:654.67px">2 <i style="width:56.7px">个引用</i>|0 <i style="width:56.7px">项更改</i>|0 <i style="width:75.6px">名作者，</i>0 <i style="width:56.7px">项更改</i></span>
<span class="c" style="left:80.6px;top:675.21px;color:#6e6e6e">77</span>
<span class="c" style="left:289.8px;top:675.21px"><span class="k">public</span> <span class="k">string</span> Name { <span class="k">get</span>; <span class="k">set</span>; } = <span class="k">string</span>.Empty;</span>
<span class="cl" style="left:289.8px;top:698.94px">1 <i style="width:56.7px">个引用</i>|0 <i style="width:56.7px">项更改</i>|0 <i style="width:75.6px">名作者，</i>0 <i style="width:56.7px">项更改</i></span>
<span class="c" style="left:80.6px;top:719.48px;color:#6e6e6e">78</span>
<span class="c" style="left:289.8px;top:719.48px"><span class="k">public</span> <span class="k">decimal</span> Price { <span class="k">get</span>; <span class="k">set</span>; }</span>
<span class="c" style="left:80.6px;top:743.65px;color:#6e6e6e">79</span>
<span class="c" style="left:249.0px;top:743.65px">}</span>
<svg class="a" style="left:101px;top:397.58px" width="24" height="22" viewBox="0 0 24 22"><path d="M13.4 9.4 L21.6 1.6" stroke="#3b3b3b" stroke-width="2.2" stroke-linecap="round"/><path d="M11.4 7.4 L15.4 11.4 L13 13.8 L9 9.8 Z" fill="#9a9a9a" stroke="#5a5a5a" stroke-width="0.8"/><path d="M8.6 10.2 L12.6 14.2 L7.4 20.4 Q5.4 21.4 3 19.6 Q0.8 17.4 2 15 Z" fill="#7fb4e6" stroke="#1b70c0" stroke-width="1.2" stroke-linejoin="round"/><path d="M5 14.4 L8.4 17.8 M3.4 16.4 L6.4 19.4" stroke="#1b70c0" stroke-width="0.9"/></svg>
<div class="a" style="left:275.2px;top:142.2px;width:614.1px;height:68.2px;border:2px solid #f23a3a;border-radius:4px;"></div>
<div class="a" style="left:279.8px;top:369.7px;width:496px;height:55.5px;border:2px solid #f23a3a;border-radius:4px;"></div>
<div class="a" style="left:1461px;top:0.0px;width:29px;height:764.2px;background:#f5f5f5;"></div>
<div class="a" style="left:1462.5px;top:22.7px;width:6.5px;height:463.5px;background:#107c10;"></div>
<div class="a" style="left:1469.5px;top:350.2px;width:15.5px;height:130.5px;background:#c2c3c9;"></div>
<div class="a" style="left:1484.5px;top:172.7px;width:5px;height:6.5px;background:#107c10;"></div>
<div class="a" style="left:1484.5px;top:299.2px;width:5px;height:6.5px;background:#107c10;"></div>
<div class="a" style="left:1461px;top:422.0px;width:29px;height:2px;background:#0000cd;"></div>
<svg class="a" style="left:1470px;top:7.199999999999989px" width="11" height="7" viewBox="0 0 11 7"><path d="M0 7 L5.5 0.6 L11 7 Z" fill="#868999"/></svg>
<svg class="a" style="left:1470px;top:750.2px" width="11" height="7" viewBox="0 0 11 7"><path d="M0 0 L5.5 6.4 L11 0 Z" fill="#868999"/></svg>
</div>
<div class="a" style="left:8.1px;top:146px;width:1.1px;height:814.5px;background:#cccedb;"></div>
<div class="a" style="left:1499px;top:146px;width:1px;height:815px;background:#cccedb;"></div>
<div class="a" style="left:9px;top:937px;width:1491px;height:23.5px;background:#f5f5f5;"></div>
<div class="a" style="left:9px;top:959.8px;width:1491px;height:1px;background:#cccedb;"></div>
<div class="a" style="left:9.4px;top:938.5px;width:74px;height:21px;background:#fff;border:1px solid #cccedb;"></div>
<span class="a t" id="t38" style="left:12.5px;top:939.6px;line-height:20px;font-size:14px;color:#1e1e1e;letter-spacing:0.082px;width:43px;">114 %</span>
<svg class="a" style="left:73.7px;top:948px;" width="6" height="3.2" viewBox="0 0 6 3.2"><path d="M0 0H6L3.0 3.2Z" fill="#5d5d60"/></svg>
<svg class="a" style="left:88px;top:941px;" width="15" height="17" viewBox="0 0 15 17"><path d="M5 11 C2.6 9.4 2.2 6.4 3.4 4.2 C4.6 2 7 0.9 9.4 1.4 C12 2 13.8 4.2 13.8 6.8 C13.8 8.8 12.8 10.2 11.6 11 V13.4 H8" fill="#e9ddf6" stroke="#7a4fb3" stroke-width="1.3" stroke-linejoin="round"/><path d="M8.6 12 V7.4 M8.6 8.4 L6.4 5.4 M8.6 8.4 L10.8 5.4 M8.4 15.6 H11.2" fill="none" stroke="#7a4fb3" stroke-width="1.1"/><path d="M6.4 11.6 L3.4 14.6" stroke="#7a4fb3" stroke-width="2.2" stroke-linecap="round"/><path d="M0.8 12.6 C0.6 14.4 1.6 16 3.4 16.2 L2.6 14.8 L3.6 13.8 L5 14.4 C5 12.8 3.6 11.6 2 12 Z" fill="#7a4fb3"/></svg>
<svg class="a" style="left:141px;top:941.6px;" width="14" height="14" viewBox="0 0 14 14"><circle cx="7" cy="7" r="6.7" fill="#d6202f"/><path d="M4.2 4.2 L9.8 9.8 M9.8 4.2 L4.2 9.8" stroke="#fff" stroke-width="1.7"/></svg>
<span class="a t" id="t39" style="left:161px;top:939.6px;line-height:20px;font-size:15px;color:#1e1e1e;width:13px;">0</span>
<svg class="a" style="left:199.4px;top:942.4px;" width="15" height="14" viewBox="0 0 15 14"><path d="M7.2 0.6 L13.9 13.2 H0.5 Z" fill="#bf8803" stroke="#bf8803" stroke-width="0.8" stroke-linejoin="round"/><path d="M7.2 4.8 V9.4 M7.2 10.6 V12.2" stroke="#fff" stroke-width="1.5"/></svg>
<span class="a t" id="t40" style="left:219px;top:939.6px;line-height:20px;font-size:15px;color:#1e1e1e;width:13px;">2</span>
<svg class="a" style="left:269px;top:942px;" width="13" height="14" viewBox="0 0 13 14"><path d="M6.5 13.4 V1.4 M1.6 6.2 L6.5 1.2 L11.4 6.2" fill="none" stroke="#1e1e1e" stroke-width="1.3"/></svg>
<svg class="a" style="left:305px;top:942px;" width="13" height="14" viewBox="0 0 13 14"><path d="M6.5 0.6 V12.6 M1.6 7.8 L6.5 12.8 L11.4 7.8" fill="none" stroke="#1e1e1e" stroke-width="1.3"/></svg>
<div class="a" style="left:338px;top:940px;width:1px;height:18px;background:#c4c5cf;"></div>
<svg class="a" style="left:356px;top:940px;" width="18" height="17" viewBox="0 0 18 17"><path d="M9.6 7.2 L16.4 1.2" stroke="#5a5a5a" stroke-width="3" stroke-linecap="round"/><path d="M6.4 5.4 L11 9.6 L7.4 15.6 L1 10 Z" fill="#e3b94f" stroke="#a87a16" stroke-width="1" stroke-linejoin="round"/><path d="M1 2.4 L2 4.4 M4.6 0.6 V3 M0.4 6.4 H2.6" stroke="#1b70c0" stroke-width="1.1"/></svg>
<svg class="a" style="left:378px;top:946.5px;" width="8" height="4.5" viewBox="0 0 8 4.5"><path d="M0 0H8L4.0 4.5Z" fill="#1e1e1e"/></svg>
<span class="a t" id="t41" style="left:1267px;top:940.1px;line-height:20px;font-size:15px;color:#1e1e1e;letter-spacing:-0.758px;width:41px;">行: 68</span>
<span class="a t" id="t42" style="left:1327px;top:940.1px;line-height:20px;font-size:15px;color:#1e1e1e;letter-spacing:-0.806px;width:55px;">字符: 23</span>
<span class="a t" id="t43" style="left:1402px;top:940.1px;line-height:20px;font-size:15px;color:#1e1e1e;letter-spacing:-2.000px;width:32px;">空格</span>
<span class="a t" id="t44" style="left:1455px;top:939.6px;line-height:20px;font-size:14px;color:#1e1e1e;letter-spacing:-1.188px;width:37px;">CRLF</span>
<div class="a" style="left:1508px;top:118px;width:373px;height:819px;background:#eeeef2;border:1px solid #cccedb;"></div>
<div class="a" style="left:1509px;top:208px;width:371px;height:728px;background:#f5f5f5;"></div>
<span class="a t" id="t45" style="left:1513px;top:122.3px;line-height:20px;font-size:15px;color:#1e1e1e;letter-spacing:0.000px;width:139px;">解决方案资源管理器</span>
<svg class="a" style="left:1657.5px;top:129.2px;" width="150" height="7" viewBox="0 0 150 7"><rect x="0.0" y="0.0" width="1.3" height="1.3" fill="#b4b6c2"/><rect x="4.6" y="0.0" width="1.3" height="1.3" fill="#b4b6c2"/><rect x="9.2" y="0.0" width="1.3" height="1.3" fill="#b4b6c2"/><rect x="13.8" y="0.0" width="1.3" height="1.3" fill="#b4b6c2"/><rect x="18.4" y="0.0" width="1.3" height="1.3" fill="#b4b6c2"/><rect x="23.0" y="0.0" width="1.3" height="1.3" fill="#b4b6c2"/><rect x="27.6" y="0.0" width="1.3" height="1.3" fill="#b4b6c2"/><rect x="32.2" y="0.0" width="1.3" height="1.3" fill="#b4b6c2"/><rect x="36.8" y="0.0" width="1.3" height="1.3" fill="#b4b6c2"/><rect x="41.4" y="0.0" width="1.3" height="1.3" fill="#b4b6c2"/><rect x="46.0" y="0.0" width="1.3" height="1.3" fill="#b4b6c2"/><rect x="50.6" y="0.0" width="1.3" height="1.3" fill="#b4b6c2"/><rect x="55.2" y="0.0" width="1.3" height="1.3" fill="#b4b6c2"/><rect x="59.8" y="0.0" width="1.3" height="1.3" fill="#b4b6c2"/><rect x="64.4" y="0.0" width="1.3" height="1.3" fill="#b4b6c2"/><rect x="69.0" y="0.0" width="1.3" height="1.3" fill="#b4b6c2"/><rect x="73.6" y="0.0" width="1.3" height="1.3" fill="#b4b6c2"/><rect x="78.2" y="0.0" width="1.3" height="1.3" fill="#b4b6c2"/><rect x="82.8" y="0.0" width="1.3" height="1.3" fill="#b4b6c2"/><rect x="87.4" y="0.0" width="1.3" height="1.3" fill="#b4b6c2"/><rect x="92.0" y="0.0" width="1.3" height="1.3" fill="#b4b6c2"/><rect x="96.6" y="0.0" width="1.3" height="1.3" fill="#b4b6c2"/><rect x="101.2" y="0.0" width="1.3" height="1.3" fill="#b4b6c2"/><rect x="105.8" y="0.0" width="1.3" height="1.3" fill="#b4b6c2"/><rect x="110.4" y="0.0" width="1.3" height="1.3" fill="#b4b6c2"/><rect x="115.0" y="0.0" width="1.3" height="1.3" fill="#b4b6c2"/><rect x="119.6" y="0.0" width="1.3" height="1.3" fill="#b4b6c2"/><rect x="124.2" y="0.0" width="1.3" height="1.3" fill="#b4b6c2"/><rect x="128.8" y="0.0" width="1.3" height="1.3" fill="#b4b6c2"/><rect x="133.4" y="0.0" width="1.3" height="1.3" fill="#b4b6c2"/><rect x="138.0" y="0.0" width="1.3" height="1.3" fill="#b4b6c2"/><rect x="142.6" y="0.0" width="1.3" height="1.3" fill="#b4b6c2"/><rect x="147.2" y="0.0" width="1.3" height="1.3" fill="#b4b6c2"/><rect x="2.3" y="2.3" width="1.3" height="1.3" fill="#b4b6c2"/><rect x="6.9" y="2.3" width="1.3" height="1.3" fill="#b4b6c2"/><rect x="11.5" y="2.3" width="1.3" height="1.3" fill="#b4b6c2"/><rect x="16.1" y="2.3" width="1.3" height="1.3" fill="#b4b6c2"/><rect x="20.7" y="2.3" width="1.3" height="1.3" fill="#b4b6c2"/><rect x="25.3" y="2.3" width="1.3" height="1.3" fill="#b4b6c2"/><rect x="29.9" y="2.3" width="1.3" height="1.3" fill="#b4b6c2"/><rect x="34.5" y="2.3" width="1.3" height="1.3" fill="#b4b6c2"/><rect x="39.1" y="2.3" width="1.3" height="1.3" fill="#b4b6c2"/><rect x="43.7" y="2.3" width="1.3" height="1.3" fill="#b4b6c2"/><rect x="48.3" y="2.3" width="1.3" height="1.3" fill="#b4b6c2"/><rect x="52.9" y="2.3" width="1.3" height="1.3" fill="#b4b6c2"/><rect x="57.5" y="2.3" width="1.3" height="1.3" fill="#b4b6c2"/><rect x="62.1" y="2.3" width="1.3" height="1.3" fill="#b4b6c2"/><rect x="66.7" y="2.3" width="1.3" height="1.3" fill="#b4b6c2"/><rect x="71.3" y="2.3" width="1.3" height="1.3" fill="#b4b6c2"/><rect x="75.9" y="2.3" width="1.3" height="1.3" fill="#b4b6c2"/><rect x="80.5" y="2.3" width="1.3" height="1.3" fill="#b4b6c2"/><rect x="85.1" y="2.3" width="1.3" height="1.3" fill="#b4b6c2"/><rect x="89.7" y="2.3" width="1.3" height="1.3" fill="#b4b6c2"/><rect x="94.3" y="2.3" width="1.3" height="1.3" fill="#b4b6c2"/><rect x="98.9" y="2.3" width="1.3" height="1.3" fill="#b4b6c2"/><rect x="103.5" y="2.3" width="1.3" height="1.3" fill="#b4b6c2"/><rect x="108.1" y="2.3" width="1.3" height="1.3" fill="#b4b6c2"/><rect x="112.7" y="2.3" width="1.3" height="1.3" fill="#b4b6c2"/><rect x="117.3" y="2.3" width="1.3" height="1.3" fill="#b4b6c2"/><rect x="121.9" y="2.3" width="1.3" height="1.3" fill="#b4b6c2"/><rect x="126.5" y="2.3" width="1.3" height="1.3" fill="#b4b6c2"/><rect x="131.1" y="2.3" width="1.3" height="1.3" fill="#b4b6c2"/><rect x="135.7" y="2.3" width="1.3" height="1.3" fill="#b4b6c2"/><rect x="140.3" y="2.3" width="1.3" height="1.3" fill="#b4b6c2"/><rect x="144.9" y="2.3" width="1.3" height="1.3" fill="#b4b6c2"/><rect x="0.0" y="4.6" width="1.3" height="1.3" fill="#b4b6c2"/><rect x="4.6" y="4.6" width="1.3" height="1.3" fill="#b4b6c2"/><rect x="9.2" y="4.6" width="1.3" height="1.3" fill="#b4b6c2"/><rect x="13.8" y="4.6" width="1.3" height="1.3" fill="#b4b6c2"/><rect x="18.4" y="4.6" width="1.3" height="1.3" fill="#b4b6c2"/><rect x="23.0" y="4.6" width="1.3" height="1.3" fill="#b4b6c2"/><rect x="27.6" y="4.6" width="1.3" height="1.3" fill="#b4b6c2"/><rect x="32.2" y="4.6" width="1.3" height="1.3" fill="#b4b6c2"/><rect x="36.8" y="4.6" width="1.3" height="1.3" fill="#b4b6c2"/><rect x="41.4" y="4.6" width="1.3" height="1.3" fill="#b4b6c2"/><rect x="46.0" y="4.6" width="1.3" height="1.3" fill="#b4b6c2"/><rect x="50.6" y="4.6" width="1.3" height="1.3" fill="#b4b6c2"/><rect x="55.2" y="4.6" width="1.3" height="1.3" fill="#b4b6c2"/><rect x="59.8" y="4.6" width="1.3" height="1.3" fill="#b4b6c2"/><rect x="64.4" y="4.6" width="1.3" height="1.3" fill="#b4b6c2"/><rect x="69.0" y="4.6" width="1.3" height="1.3" fill="#b4b6c2"/><rect x="73.6" y="4.6" width="1.3" height="1.3" fill="#b4b6c2"/><rect x="78.2" y="4.6" width="1.3" height="1.3" fill="#b4b6c2"/><rect x="82.8" y="4.6" width="1.3" height="1.3" fill="#b4b6c2"/><rect x="87.4" y="4.6" width="1.3" height="1.3" fill="#b4b6c2"/><rect x="92.0" y="4.6" width="1.3" height="1.3" fill="#b4b6c2"/><rect x="96.6" y="4.6" width="1.3" height="1.3" fill="#b4b6c2"/><rect x="101.2" y="4.6" width="1.3" height="1.3" fill="#b4b6c2"/><rect x="105.8" y="4.6" width="1.3" height="1.3" fill="#b4b6c2"/><rect x="110.4" y="4.6" width="1.3" height="1.3" fill="#b4b6c2"/><rect x="115.0" y="4.6" width="1.3" height="1.3" fill="#b4b6c2"/><rect x="119.6" y="4.6" width="1.3" height="1.3" fill="#b4b6c2"/><rect x="124.2" y="4.6" width="1.3" height="1.3" fill="#b4b6c2"/><rect x="128.8" y="4.6" width="1.3" height="1.3" fill="#b4b6c2"/><rect x="133.4" y="4.6" width="1.3" height="1.3" fill="#b4b6c2"/><rect x="138.0" y="4.6" width="1.3" height="1.3" fill="#b4b6c2"/><rect x="142.6" y="4.6" width="1.3" height="1.3" fill="#b4b6c2"/><rect x="147.2" y="4.6" width="1.3" height="1.3" fill="#b4b6c2"/></svg>
<svg class="a" style="left:1818px;top:129px;" width="11" height="6" viewBox="0 0 11 6"><path d="M0 0 H11 L5.5 6 Z" fill="#1e1e1e"/></svg>
<svg class="a" style="left:1839px;top:125px;" width="10" height="14" viewBox="0 0 10 14"><path d="M2 0.8 H8 M3 0.8 V7.6 M7 0.8 V7.6 M0.4 7.6 H9.6 M5 7.6 V13.6" fill="none" stroke="#1e1e1e" stroke-width="1.5"/><path d="M6.2 1 V7.4" stroke="#1e1e1e" stroke-width="2"/></svg>
<svg class="a" style="left:1859.5px;top:126px;" width="11" height="11" viewBox="0 0 11 11"><path d="M0.6 0.6 L10.4 10.4 M10.4 0.6 L0.6 10.4" stroke="#1e1e1e" stroke-width="1.6"/></svg>
<svg class="a" style="left:1516px;top:153px;" width="21" height="21" viewBox="0 0 21 21"><path d="M8.4 9 V2.2 Q8.4 1 9.6 1 H18.6 Q19.8 1 19.8 2.2 V13.4 Q19.8 14.6 18.6 14.6 H13" fill="#e4e4e8" stroke="#2a2a2a" stroke-width="1.3"/><path d="M8.4 2.8 H19.8" stroke="#2a2a2a" stroke-width="2.6"/><path d="M11.4 6.6 H12.6 M14 6.6 H17.6 M11.4 9 H12.6 M14 9 H17.6 M14 11.4 H17.6" stroke="#2a2a2a" stroke-width="1.1"/><path d="M10.6 9.6 V19.6 L5.4 14.6 Z" fill="#eeeef2" stroke="#8b50c7" stroke-width="1.5" stroke-linejoin="round"/><path d="M1 11.8 L4.6 14.6 L1 17.4 Z" fill="#eeeef2" stroke="#8b50c7" stroke-width="1.4" stroke-linejoin="round"/></svg>
<div class="a" style="left:1545.5px;top:151px;width:1px;height:24px;background:#cccedb;"></div>
<svg class="a" style="left:1554px;top:152px;" width="20" height="20" viewBox="0 0 20 20"><path d="M0.6 0.4 H7 L4.4 3.4 V6 L3.2 5 V3.4 Z" fill="#1b70c0"/><circle cx="11.6" cy="12" r="6.4" fill="#dedee2" stroke="#1e1e1e" stroke-width="1.4"/><path d="M11.6 8 V12.4 H15" fill="none" stroke="#1e1e1e" stroke-width="1.4"/></svg>
<svg class="a" style="left:1582.5px;top:161.5px;" width="7" height="4" viewBox="0 0 7 4"><path d="M0 0H7L3.5 4Z" fill="#6a6a6a"/></svg>
<svg class="a" style="left:1598px;top:156px;" width="17" height="14" viewBox="0 0 17 14"><path d="M16.2 4.4 H1 M5.4 0.6 L1 4.4 M0.8 9.6 H16 M11.6 13.4 L16 9.6" fill="none" stroke="#2a2a2a" stroke-width="1.4"/></svg>
<svg class="a" style="left:1624px;top:153px;" width="20" height="19" viewBox="0 0 20 19"><path d="M3.4 3 V2 Q3.4 0.8 4.6 0.8 H17.6 Q18.8 0.8 18.8 2 V14.6 Q18.8 15.8 17.6 15.8 H16.4" fill="none" stroke="#424242" stroke-width="1.3"/><rect x="0.8" y="3.4" width="15.4" height="14.6" rx="1.2" fill="#e8e8ec" stroke="#424242" stroke-width="1.3"/><path d="M4.4 10.8 H12.6" stroke="#1e1e1e" stroke-width="1.5"/></svg>
<svg class="a" style="left:1650.5px;top:154px;" width="19" height="18" viewBox="0 0 19 18"><rect x="6.4" y="0.8" width="11.6" height="11.6" rx="1.6" fill="#e0e0e6" stroke="#424242" stroke-width="1.3"/><rect x="0.8" y="5.6" width="11.6" height="11.6" rx="1.6" fill="none" stroke="#424242" stroke-width="1.3"/></svg>
<div class="a" style="left:1678.5px;top:151px;width:1px;height:24px;background:#cccedb;"></div>
<div class="a" style="left:1685.3px;top:149px;width:26.5px;height:26.5px;background:#f0f1f6;border:1px solid #4a9cf0;"></div>
<svg class="a" style="left:1689px;top:153px;" width="19" height="19" viewBox="0 0 19 19"><circle cx="2.6" cy="2.6" r="1.7" fill="none" stroke="#1e1e1e" stroke-width="1.2"/><path d="M2.6 4.4 V6 Q2.6 8 4.6 8 H5.4" fill="none" stroke="#1e1e1e" stroke-width="1.2"/><circle cx="7.6" cy="8.6" r="1.9" fill="none" stroke="#1e1e1e" stroke-width="1.2"/><path d="M8.6 10.4 Q9 13.6 11.4 14" fill="none" stroke="#1e1e1e" stroke-width="1.2"/><rect x="11.6" y="11" width="6" height="6" rx="1.2" fill="none" stroke="#1e1e1e" stroke-width="1.3"/></svg>
<svg class="a" style="left:1715px;top:161.5px;" width="7" height="4" viewBox="0 0 7 4"><path d="M0 0H7L3.5 4Z" fill="#6a6a6a"/></svg>
<div class="a" style="left:1730.5px;top:151px;width:1px;height:24px;background:#cccedb;"></div>
<svg class="a" style="left:1739px;top:153px;" width="19" height="19" viewBox="0 0 19 19"><path d="M1.6 17.4 L10 9" stroke="#1e1e1e" stroke-width="2.6" stroke-linecap="round"/><path d="M2 17 L3 16" stroke="#eeeef2" stroke-width="1"/><path d="M17.6 4.4 L14.6 7.2 L12 6.8 L11.6 4.2 L14.4 1.4 C12 0.4 9.6 1.2 8.6 3.2 C7.6 5.2 8.2 7.2 9.4 8.6 L10.8 10 C12.4 10.8 14.6 10.8 16.2 9.6 C17.8 8.4 18.4 6.4 17.6 4.4 Z" fill="#1e1e1e"/></svg>
<div class="a" style="left:1763.2px;top:148.2px;width:26.5px;height:28.5px;background:#f0f1f6;border:1px solid #4a9cf0;"></div>
<svg class="a" style="left:1766px;top:157px;" width="21" height="13" viewBox="0 0 21 13"><path d="M0.6 9.4 H3.4 V6 H13.4 V9.4 H3.4 M0.6 9.4 V11" fill="none" stroke="#1e1e1e" stroke-width="1.4"/><path d="M3.4 9.4 H13.6" stroke="#1e1e1e" stroke-width="2"/><path d="M14.6 1 L16 3 M17 5.6 H20 M15 9 L16.6 10.6" stroke="#d9a520" stroke-width="1.3"/></svg>
<div class="a" style="left:1511.7px;top:181px;width:364.6px;height:25.3px;background:#fff;border:1px solid #cccedb;"></div>
<span class="a t" id="t46" style="left:1517px;top:184.6px;line-height:20px;font-size:15px;color:#5a5a5a;letter-spacing:0.242px;width:219.6px;">搜索解决方案资源管理器(Ctrl+;)</span>
<svg class="a" style="left:1842px;top:186px;" width="17" height="17" viewBox="0 0 17 17"><circle cx="10.6" cy="6" r="4.4" fill="none" stroke="#5a5a5a" stroke-width="2"/><path d="M7.6 9.4 L1.8 15.4" stroke="#5a5a5a" stroke-width="2.6" stroke-linecap="round"/></svg>
<svg class="a" style="left:1866px;top:193px;" width="7" height="3.6" viewBox="0 0 7 3.6"><path d="M0 0H7L3.5 3.6Z" fill="#6a6a6a"/></svg>
<svg class="a" style="left:1522.1px;top:215.0px;" width="7" height="12" viewBox="0 0 7 12"><path d="M0.8 0.9 L6 6 L0.8 11.1 Z" fill="none" stroke="#1e1e1e" stroke-width="1.3" stroke-linejoin="round"/></svg>
<svg class="a" style="left:1538.1px;top:217.29999999999998px;" width="8" height="9.6" viewBox="0 0 8 9.6"><path d="M2.3 4.4 V2.9 Q2.3 0.8 4 0.8 Q5.7 0.8 5.7 2.9 V4.4" fill="none" stroke="#1b7fd4" stroke-width="1.4"/><rect x="0.8" y="4.3" width="6.4" height="4.5" rx="0.6" fill="#dceaf8" stroke="#1b7fd4" stroke-width="1.5"/></svg>
<svg class="a" style="left:1550.9px;top:214.9px;" width="17.6" height="14.4" viewBox="0 0 17.6 14.4"><rect x="0.7" y="0.7" width="16.2" height="13" rx="1" fill="#e6e6e6" stroke="#5a5a5a" stroke-width="1.4"/><path d="M7.2 4.9 C6.2 3.6 4 3.8 3.2 5.5 C2.5 7 2.8 8.9 4.1 9.7 C5.2 10.4 6.6 10 7.2 9.1" fill="none" stroke="#3a9a45" stroke-width="1.5"/><path d="M10.6 3.6 L10.2 9.4 M13.4 3.6 L13 9.4 M9 5.4 H14.8 M8.8 7.8 H14.6" stroke="#3a9a45" stroke-width="1.1"/></svg>
<span class="a t" id="t47" style="left:1575.8px;top:211.6px;line-height:20px;font-size:15px;color:#1e1e1e;letter-spacing:1.107px;width:119px;">Mediator.Demo</span>
<svg class="a" style="left:1521.5px;top:241.0px;" width="8.2" height="8.2" viewBox="0 0 8.2 8.2"><path d="M8.2 0 V8.2 H0 Z" fill="#1e1e1e"/></svg>
<svg class="a" style="left:1538.1px;top:241.29999999999998px;" width="8" height="9.6" viewBox="0 0 8 9.6"><path d="M2.3 4.4 V2.9 Q2.3 0.8 4 0.8 Q5.7 0.8 5.7 2.9 V4.4" fill="none" stroke="#1b7fd4" stroke-width="1.4"/><rect x="0.8" y="4.3" width="6.4" height="4.5" rx="0.6" fill="#dceaf8" stroke="#1b7fd4" stroke-width="1.5"/></svg>
<svg class="a" style="left:1549.3px;top:236.6px;" width="21" height="20" viewBox="0 0 21 20"><path d="M3.8 3 Q3.8 1.6 5.2 1.6 H18.6 Q20 1.6 20 3 V14.4 Q20 15.2 19.2 15.2 H12" fill="#dcdce0" stroke="#4a4a4a" stroke-width="1.2"/><path d="M3.8 3.6 H20" stroke="#3a3a3a" stroke-width="2.4"/><circle cx="6.6" cy="13.3" r="6.1" fill="#1b7fd4"/><path d="M0.8 13.3 H12.4 M6.6 7.4 V19.2 M6.6 7.6 C3.4 10 3.4 16.6 6.6 19 M6.6 7.6 C9.8 10 9.8 16.6 6.6 19 M1.6 10.4 H11.6 M1.6 16.2 H11.6" fill="none" stroke="#eaf3fc" stroke-width="0.9"/></svg>
<span class="a t" id="t48" style="left:1575.8px;top:235.6px;line-height:20px;font-size:15px;color:#1e1e1e;font-weight:bold;letter-spacing:0.417px;width:120px;">Peng.Study.API</span>
<svg class="a" style="left:1544.3999999999999px;top:263.0px;" width="7" height="12" viewBox="0 0 7 12"><path d="M0.8 0.9 L6 6 L0.8 11.1 Z" fill="none" stroke="#1e1e1e" stroke-width="1.3" stroke-linejoin="round"/></svg>
<svg class="a" style="left:1572.3999999999999px;top:264.2px;" width="19" height="17" viewBox="0 0 19 17"><path d="M4.6 10.6 C1.6 10.6 0.6 8.8 1 7 C1.4 5.4 3 4.6 4.4 4.8 C5 2.2 7.4 0.8 9.8 0.9 C12.4 1 14.2 2.6 14.6 4.8 C16.6 4.8 17.9 6.2 17.7 8 C17.5 9.6 16.2 10.6 14.4 10.6" fill="#e8f2fb" stroke="#5aa7e4" stroke-width="1.3"/><path d="M7.6 5 V7.4 M11.2 5 V7.4" stroke="#2aa198" stroke-width="1.4"/><path d="M6.2 7.4 H12.6 V9.4 Q12.6 12 9.4 12 Q6.2 12 6.2 9.4 Z" fill="#bfe6e0" stroke="#2aa198" stroke-width="1.4"/><path d="M9.4 12 V16.4" stroke="#2aa198" stroke-width="1.6"/></svg>
<span class="a t" id="t49" style="left:1598.1px;top:259.6px;line-height:20px;font-size:15px;color:#1e1e1e;letter-spacing:0.532px;width:147.3px;">Connected Services</span>
<svg class="a" style="left:1543.8px;top:289.0px;" width="8.2" height="8.2" viewBox="0 0 8.2 8.2"><path d="M8.2 0 V8.2 H0 Z" fill="#1e1e1e"/></svg>
<svg class="a" style="left:1560.3999999999999px;top:289.3px;" width="8" height="9.6" viewBox="0 0 8 9.6"><path d="M2.3 4.4 V2.9 Q2.3 0.8 4 0.8 Q5.7 0.8 5.7 2.9 V4.4" fill="none" stroke="#1b7fd4" stroke-width="1.4"/><rect x="0.8" y="4.3" width="6.4" height="4.5" rx="0.6" fill="#dceaf8" stroke="#1b7fd4" stroke-width="1.5"/></svg>
<svg class="a" style="left:1572.5px;top:287.0px;" width="18.2" height="13" viewBox="0 0 18.2 13"><path d="M0.7 1.4 Q0.7 0.7 1.4 0.7 H7.6 L9.2 2.3 H16.8 Q17.5 2.3 17.5 3 V11.6 Q17.5 12.3 16.8 12.3 H1.4 Q0.7 12.3 0.7 11.6 Z" fill="#d9b870" stroke="#c09332" stroke-width="1.3" stroke-linejoin="round"/><path d="M0.8 3.9 H7.4 L9 2.5" fill="none" stroke="#c09332" stroke-width="1"/></svg>
<svg class="a" style="left:1571.1px;top:294.3px;" width="12" height="10" viewBox="0 0 12 10"><path d="M10 8.6 L5.4 4.6" stroke="#1e1e1e" stroke-width="2.6" stroke-linecap="round"/><path d="M0.8 1.6 C2.2 0.4 4.4 0.6 5.6 2 C6.6 3.2 6.4 4.6 5.8 5.6 L4.6 6.4 C3.2 6.8 1.6 6.4 0.6 5 L3 4.8 L3.6 3 Z" fill="#1e1e1e"/></svg>
<span class="a t" id="t50" style="left:1598.1px;top:283.6px;line-height:20px;font-size:15px;color:#1e1e1e;letter-spacing:0.769px;width:79.3px;">Properties</span>
<svg class="a" style="left:1582.8px;top:313.3px;" width="8" height="9.6" viewBox="0 0 8 9.6"><path d="M2.3 4.4 V2.9 Q2.3 0.8 4 0.8 Q5.7 0.8 5.7 2.9 V4.4" fill="none" stroke="#1b7fd4" stroke-width="1.4"/><rect x="0.8" y="4.3" width="6.4" height="4.5" rx="0.6" fill="#dceaf8" stroke="#1b7fd4" stroke-width="1.5"/></svg>
<svg class="a" style="left:1597.2px;top:309.8px;" width="15.4" height="16.4" viewBox="0 0 15.4 16.4"><path d="M0.8 1.8 Q0.8 0.8 1.8 0.8 H9.6 L14.4 5.6 V14.6 Q14.4 15.6 13.4 15.6 H1.8 Q0.8 15.6 0.8 14.6 Z" fill="#f2f2f2" stroke="#6a6a6a" stroke-width="1.4"/><path d="M6 6.6 Q4.6 6.6 4.6 8 V9 Q4.6 10 3.5 10 Q4.6 10 4.6 11 V12 Q4.6 13.4 6 13.4 M9.2 6.6 Q10.6 6.6 10.6 8 V9 Q10.6 10 11.7 10 Q10.6 10 10.6 11 V12 Q10.6 13.4 9.2 13.4" fill="none" stroke="#3a3a3a" stroke-width="1.3"/></svg>
<span class="a t" id="t51" style="left:1620.5px;top:307.6px;line-height:20px;font-size:15px;color:#1e1e1e;letter-spacing:0.539px;width:143.8px;">launchSettings.json</span>
<svg class="a" style="left:1544.3999999999999px;top:335.0px;" width="7" height="12" viewBox="0 0 7 12"><path d="M0.8 0.9 L6 6 L0.8 11.1 Z" fill="none" stroke="#1e1e1e" stroke-width="1.3" stroke-linejoin="round"/></svg>
<svg class="a" style="left:1571.2px;top:334.6px;" width="21" height="12.4" viewBox="0 0 21 12.4"><rect x="13.6" y="0.6" width="6.8" height="6.8" fill="#d9d9dd" stroke="#6a6a6a" stroke-width="1.2"/><rect x="10.6" y="5.4" width="6.6" height="6.4" fill="#ededf0" stroke="#4a4a4a" stroke-width="1.3"/><rect x="0.7" y="6.8" width="4.4" height="4.4" fill="#ededf0" stroke="#4a4a4a" stroke-width="1.3"/><path d="M5 9 H10.6 M5 5.4 V6.8" stroke="#4a4a4a" stroke-width="1.3"/><rect x="3.6" y="3" width="3" height="3" fill="#4a4a4a"/><path d="M6.6 4.6 H10.6" stroke="#4a4a4a" stroke-width="1.2"/></svg>
<span class="a t" id="t52" style="left:1598.1px;top:332.1px;line-height:20px;font-size:15px;color:#1e1e1e;letter-spacing:0.000px;width:49px;">依赖项</span>
<svg class="a" style="left:1544.3999999999999px;top:359.0px;" width="7" height="12" viewBox="0 0 7 12"><path d="M0.8 0.9 L6 6 L0.8 11.1 Z" fill="none" stroke="#1e1e1e" stroke-width="1.3" stroke-linejoin="round"/></svg>
<svg class="a" style="left:1560.3999999999999px;top:361.3px;" width="8" height="9.6" viewBox="0 0 8 9.6"><path d="M2.3 4.4 V2.9 Q2.3 0.8 4 0.8 Q5.7 0.8 5.7 2.9 V4.4" fill="none" stroke="#1b7fd4" stroke-width="1.4"/><rect x="0.8" y="4.3" width="6.4" height="4.5" rx="0.6" fill="#dceaf8" stroke="#1b7fd4" stroke-width="1.5"/></svg>
<svg class="a" style="left:1572.5px;top:358.9px;" width="18.2" height="13" viewBox="0 0 18.2 13"><path d="M0.7 1.4 Q0.7 0.7 1.4 0.7 H7.6 L9.2 2.3 H16.8 Q17.5 2.3 17.5 3 V11.6 Q17.5 12.3 16.8 12.3 H1.4 Q0.7 12.3 0.7 11.6 Z" fill="#d9b870" stroke="#c09332" stroke-width="1.3" stroke-linejoin="round"/><path d="M0.8 3.9 H7.4 L9 2.5" fill="none" stroke="#c09332" stroke-width="1"/></svg>
<span class="a t" id="t53" style="left:1598.1px;top:355.6px;line-height:20px;font-size:15px;color:#1e1e1e;letter-spacing:0.312px;width:73.2px;">Behaviors</span>
<svg class="a" style="left:1544.3999999999999px;top:383.0px;" width="7" height="12" viewBox="0 0 7 12"><path d="M0.8 0.9 L6 6 L0.8 11.1 Z" fill="none" stroke="#1e1e1e" stroke-width="1.3" stroke-linejoin="round"/></svg>
<svg class="a" style="left:1560.3999999999999px;top:385.3px;" width="8" height="9.6" viewBox="0 0 8 9.6"><path d="M2.3 4.4 V2.9 Q2.3 0.8 4 0.8 Q5.7 0.8 5.7 2.9 V4.4" fill="none" stroke="#1b7fd4" stroke-width="1.4"/><rect x="0.8" y="4.3" width="6.4" height="4.5" rx="0.6" fill="#dceaf8" stroke="#1b7fd4" stroke-width="1.5"/></svg>
<svg class="a" style="left:1572.5px;top:382.9px;" width="18.2" height="13" viewBox="0 0 18.2 13"><path d="M0.7 1.4 Q0.7 0.7 1.4 0.7 H7.6 L9.2 2.3 H16.8 Q17.5 2.3 17.5 3 V11.6 Q17.5 12.3 16.8 12.3 H1.4 Q0.7 12.3 0.7 11.6 Z" fill="#d9b870" stroke="#c09332" stroke-width="1.3" stroke-linejoin="round"/><path d="M0.8 3.9 H7.4 L9 2.5" fill="none" stroke="#c09332" stroke-width="1"/></svg>
<span class="a t" id="t54" style="left:1598.1px;top:379.6px;line-height:20px;font-size:15px;color:#1e1e1e;letter-spacing:0.816px;width:78.1px;">Command</span>
<svg class="a" style="left:1543.8px;top:409.0px;" width="8.2" height="8.2" viewBox="0 0 8.2 8.2"><path d="M8.2 0 V8.2 H0 Z" fill="#1e1e1e"/></svg>
<svg class="a" style="left:1560.3999999999999px;top:409.3px;" width="8" height="9.6" viewBox="0 0 8 9.6"><path d="M2.3 4.4 V2.9 Q2.3 0.8 4 0.8 Q5.7 0.8 5.7 2.9 V4.4" fill="none" stroke="#1b7fd4" stroke-width="1.4"/><rect x="0.8" y="4.3" width="6.4" height="4.5" rx="0.6" fill="#dceaf8" stroke="#1b7fd4" stroke-width="1.5"/></svg>
<svg class="a" style="left:1572.5px;top:406.9px;" width="18.2" height="13" viewBox="0 0 18.2 13"><path d="M0.7 1.4 Q0.7 0.7 1.4 0.7 H7.6 L9.2 2.3 H16.8 Q17.5 2.3 17.5 3 V11.6 Q17.5 12.3 16.8 12.3 H1.4 Q0.7 12.3 0.7 11.6 Z" fill="#d9b870" stroke="#c09332" stroke-width="1.3" stroke-linejoin="round"/><path d="M0.8 3.9 H7.4 L9 2.5" fill="none" stroke="#c09332" stroke-width="1"/></svg>
<span class="a t" id="t55" style="left:1598.1px;top:403.6px;line-height:20px;font-size:15px;color:#1e1e1e;letter-spacing:0.757px;width:84.1px;">Controllers</span>
<div class="a" style="left:1509px;top:425.0px;width:349.9px;height:24px;background:#cccedb;"></div>
<svg class="a" style="left:1566.8px;top:431.0px;" width="7" height="12" viewBox="0 0 7 12"><path d="M0.8 0.9 L6 6 L0.8 11.1 Z" fill="none" stroke="#1e1e1e" stroke-width="1.3" stroke-linejoin="round"/></svg>
<svg class="a" style="left:1583.5px;top:434.5px;" width="7.4" height="7.4" viewBox="0 0 7.4 7.4"><path d="M3.7 0 V7.4 M0 3.7 H7.4" stroke="#3a9a45" stroke-width="1.5"/></svg>
<svg class="a" style="left:1595.6000000000001px;top:433.3px;" width="18" height="10" viewBox="0 0 18 10"><path d="M7.4 2.2 C6 0.6 3.2 0.7 1.9 2.5 C0.7 4.2 0.8 6.6 2.2 8 C3.6 9.4 6.2 9.2 7.4 7.8" fill="none" stroke="#3a9a45" stroke-width="2"/><path d="M11.6 0.3 L11 7.3 M15.2 0.3 L14.6 7.3 M9.6 2.3 H17.4 M9.2 5.3 H17" stroke="#3a9a45" stroke-width="1.5"/></svg>
<span class="a t" id="t56" style="left:1620.5px;top:427.6px;line-height:20px;font-size:15px;color:#1e1e1e;letter-spacing:0.786px;width:154px;">ProductController.cs</span>
<svg class="a" style="left:1566.8px;top:455.0px;" width="7" height="12" viewBox="0 0 7 12"><path d="M0.8 0.9 L6 6 L0.8 11.1 Z" fill="none" stroke="#1e1e1e" stroke-width="1.3" stroke-linejoin="round"/></svg>
<svg class="a" style="left:1583.1999999999998px;top:459.55px;" width="8.4" height="6.4" viewBox="0 0 8.4 6.4"><path d="M0.5 3.4 L2.9 5.7 L7.9 0.6" fill="none" stroke="#d8334a" stroke-width="1.5"/></svg>
<svg class="a" style="left:1595.6000000000001px;top:457.3px;" width="18" height="10" viewBox="0 0 18 10"><path d="M7.4 2.2 C6 0.6 3.2 0.7 1.9 2.5 C0.7 4.2 0.8 6.6 2.2 8 C3.6 9.4 6.2 9.2 7.4 7.8" fill="none" stroke="#3a9a45" stroke-width="2"/><path d="M11.6 0.3 L11 7.3 M15.2 0.3 L14.6 7.3 M9.6 2.3 H17.4 M9.2 5.3 H17" stroke="#3a9a45" stroke-width="1.5"/></svg>
<span class="a t" id="t57" style="left:1620.5px;top:451.6px;line-height:20px;font-size:15px;color:#1e1e1e;letter-spacing:0.622px;width:129px;">UserController.cs</span>
<svg class="a" style="left:1566.8px;top:479.0px;" width="7" height="12" viewBox="0 0 7 12"><path d="M0.8 0.9 L6 6 L0.8 11.1 Z" fill="none" stroke="#1e1e1e" stroke-width="1.3" stroke-linejoin="round"/></svg>
<svg class="a" style="left:1582.8px;top:481.3px;" width="8" height="9.6" viewBox="0 0 8 9.6"><path d="M2.3 4.4 V2.9 Q2.3 0.8 4 0.8 Q5.7 0.8 5.7 2.9 V4.4" fill="none" stroke="#1b7fd4" stroke-width="1.4"/><rect x="0.8" y="4.3" width="6.4" height="4.5" rx="0.6" fill="#dceaf8" stroke="#1b7fd4" stroke-width="1.5"/></svg>
<svg class="a" style="left:1595.6000000000001px;top:481.3px;" width="18" height="10" viewBox="0 0 18 10"><path d="M7.4 2.2 C6 0.6 3.2 0.7 1.9 2.5 C0.7 4.2 0.8 6.6 2.2 8 C3.6 9.4 6.2 9.2 7.4 7.8" fill="none" stroke="#3a9a45" stroke-width="2"/><path d="M11.6 0.3 L11 7.3 M15.2 0.3 L14.6 7.3 M9.6 2.3 H17.4 M9.2 5.3 H17" stroke="#3a9a45" stroke-width="1.5"/></svg>
<span class="a t" id="t58" style="left:1620.5px;top:475.6px;line-height:20px;font-size:15px;color:#1e1e1e;letter-spacing:0.661px;width:220px;">WeatherForecastController.cs</span>
<svg class="a" style="left:1544.3999999999999px;top:503.0px;" width="7" height="12" viewBox="0 0 7 12"><path d="M0.8 0.9 L6 6 L0.8 11.1 Z" fill="none" stroke="#1e1e1e" stroke-width="1.3" stroke-linejoin="round"/></svg>
<svg class="a" style="left:1560.3999999999999px;top:505.3px;" width="8" height="9.6" viewBox="0 0 8 9.6"><path d="M2.3 4.4 V2.9 Q2.3 0.8 4 0.8 Q5.7 0.8 5.7 2.9 V4.4" fill="none" stroke="#1b7fd4" stroke-width="1.4"/><rect x="0.8" y="4.3" width="6.4" height="4.5" rx="0.6" fill="#dceaf8" stroke="#1b7fd4" stroke-width="1.5"/></svg>
<svg class="a" style="left:1572.5px;top:502.9px;" width="18.2" height="13" viewBox="0 0 18.2 13"><path d="M0.7 1.4 Q0.7 0.7 1.4 0.7 H7.6 L9.2 2.3 H16.8 Q17.5 2.3 17.5 3 V11.6 Q17.5 12.3 16.8 12.3 H1.4 Q0.7 12.3 0.7 11.6 Z" fill="#d9b870" stroke="#c09332" stroke-width="1.3" stroke-linejoin="round"/><path d="M0.8 3.9 H7.4 L9 2.5" fill="none" stroke="#c09332" stroke-width="1"/></svg>
<span class="a t" id="t59" style="left:1598.1px;top:499.6px;line-height:20px;font-size:15px;color:#1e1e1e;letter-spacing:0.292px;width:80px;">Extensions</span>
<svg class="a" style="left:1543.8px;top:529.0px;" width="8.2" height="8.2" viewBox="0 0 8.2 8.2"><path d="M8.2 0 V8.2 H0 Z" fill="#1e1e1e"/></svg>
<svg class="a" style="left:1560.3999999999999px;top:529.3000000000001px;" width="8" height="9.6" viewBox="0 0 8 9.6"><path d="M2.3 4.4 V2.9 Q2.3 0.8 4 0.8 Q5.7 0.8 5.7 2.9 V4.4" fill="none" stroke="#1b7fd4" stroke-width="1.4"/><rect x="0.8" y="4.3" width="6.4" height="4.5" rx="0.6" fill="#dceaf8" stroke="#1b7fd4" stroke-width="1.5"/></svg>
<svg class="a" style="left:1572.5px;top:526.9px;" width="18.2" height="13" viewBox="0 0 18.2 13"><path d="M0.7 1.4 Q0.7 0.7 1.4 0.7 H7.6 L9.2 2.3 H16.8 Q17.5 2.3 17.5 3 V11.6 Q17.5 12.3 16.8 12.3 H1.4 Q0.7 12.3 0.7 11.6 Z" fill="#d9b870" stroke="#c09332" stroke-width="1.3" stroke-linejoin="round"/><path d="M0.8 3.9 H7.4 L9 2.5" fill="none" stroke="#c09332" stroke-width="1"/></svg>
<span class="a t" id="t60" style="left:1598.1px;top:523.6px;line-height:20px;font-size:15px;color:#1e1e1e;letter-spacing:0.531px;width:40px;">Filter</span>
<svg class="a" style="left:1566.8px;top:551.0px;" width="7" height="12" viewBox="0 0 7 12"><path d="M0.8 0.9 L6 6 L0.8 11.1 Z" fill="none" stroke="#1e1e1e" stroke-width="1.3" stroke-linejoin="round"/></svg>
<svg class="a" style="left:1583.5px;top:554.5px;" width="7.4" height="7.4" viewBox="0 0 7.4 7.4"><path d="M3.7 0 V7.4 M0 3.7 H7.4" stroke="#3a9a45" stroke-width="1.5"/></svg>
<svg class="a" style="left:1595.6000000000001px;top:553.3px;" width="18" height="10" viewBox="0 0 18 10"><path d="M7.4 2.2 C6 0.6 3.2 0.7 1.9 2.5 C0.7 4.2 0.8 6.6 2.2 8 C3.6 9.4 6.2 9.2 7.4 7.8" fill="none" stroke="#3a9a45" stroke-width="2"/><path d="M11.6 0.3 L11 7.3 M15.2 0.3 L14.6 7.3 M9.6 2.3 H17.4 M9.2 5.3 H17" stroke="#3a9a45" stroke-width="1.5"/></svg>
<span class="a t" id="t61" style="left:1620.5px;top:547.6px;line-height:20px;font-size:15px;color:#1e1e1e;letter-spacing:0.746px;width:211px;">ActionLoggingAsyncFilter.cs</span>
<svg class="a" style="left:1566.8px;top:575.0px;" width="7" height="12" viewBox="0 0 7 12"><path d="M0.8 0.9 L6 6 L0.8 11.1 Z" fill="none" stroke="#1e1e1e" stroke-width="1.3" stroke-linejoin="round"/></svg>
<svg class="a" style="left:1583.5px;top:578.5px;" width="7.4" height="7.4" viewBox="0 0 7.4 7.4"><path d="M3.7 0 V7.4 M0 3.7 H7.4" stroke="#3a9a45" stroke-width="1.5"/></svg>
<svg class="a" style="left:1595.6000000000001px;top:577.3px;" width="18" height="10" viewBox="0 0 18 10"><path d="M7.4 2.2 C6 0.6 3.2 0.7 1.9 2.5 C0.7 4.2 0.8 6.6 2.2 8 C3.6 9.4 6.2 9.2 7.4 7.8" fill="none" stroke="#3a9a45" stroke-width="2"/><path d="M11.6 0.3 L11 7.3 M15.2 0.3 L14.6 7.3 M9.6 2.3 H17.4 M9.2 5.3 H17" stroke="#3a9a45" stroke-width="1.5"/></svg>
<span class="a t" id="t62" style="left:1620.5px;top:571.6px;line-height:20px;font-size:15px;color:#1e1e1e;letter-spacing:0.812px;width:167.8px;">ActionLoggingFilter.cs</span>
<svg class="a" style="left:1566.8px;top:599.0px;" width="7" height="12" viewBox="0 0 7 12"><path d="M0.8 0.9 L6 6 L0.8 11.1 Z" fill="none" stroke="#1e1e1e" stroke-width="1.3" stroke-linejoin="round"/></svg>
<svg class="a" style="left:1583.5px;top:602.5px;" width="7.4" height="7.4" viewBox="0 0 7.4 7.4"><path d="M3.7 0 V7.4 M0 3.7 H7.4" stroke="#3a9a45" stroke-width="1.5"/></svg>
<svg class="a" style="left:1595.6000000000001px;top:601.3px;" width="18" height="10" viewBox="0 0 18 10"><path d="M7.4 2.2 C6 0.6 3.2 0.7 1.9 2.5 C0.7 4.2 0.8 6.6 2.2 8 C3.6 9.4 6.2 9.2 7.4 7.8" fill="none" stroke="#3a9a45" stroke-width="2"/><path d="M11.6 0.3 L11 7.3 M15.2 0.3 L14.6 7.3 M9.6 2.3 H17.4 M9.2 5.3 H17" stroke="#3a9a45" stroke-width="1.5"/></svg>
<span class="a t" id="t63" style="left:1620.5px;top:595.6px;line-height:20px;font-size:15px;color:#1e1e1e;letter-spacing:0.561px;width:177.8px;">GlobalExceptionFilter.cs</span>
<svg class="a" style="left:1566.8px;top:623.0px;" width="7" height="12" viewBox="0 0 7 12"><path d="M0.8 0.9 L6 6 L0.8 11.1 Z" fill="none" stroke="#1e1e1e" stroke-width="1.3" stroke-linejoin="round"/></svg>
<svg class="a" style="left:1583.5px;top:626.5px;" width="7.4" height="7.4" viewBox="0 0 7.4 7.4"><path d="M3.7 0 V7.4 M0 3.7 H7.4" stroke="#3a9a45" stroke-width="1.5"/></svg>
<svg class="a" style="left:1595.6000000000001px;top:625.3px;" width="18" height="10" viewBox="0 0 18 10"><path d="M7.4 2.2 C6 0.6 3.2 0.7 1.9 2.5 C0.7 4.2 0.8 6.6 2.2 8 C3.6 9.4 6.2 9.2 7.4 7.8" fill="none" stroke="#3a9a45" stroke-width="2"/><path d="M11.6 0.3 L11 7.3 M15.2 0.3 L14.6 7.3 M9.6 2.3 H17.4 M9.2 5.3 H17" stroke="#3a9a45" stroke-width="1.5"/></svg>
<span class="a t" id="t64" style="left:1620.5px;top:619.6px;line-height:20px;font-size:15px;color:#1e1e1e;letter-spacing:0.644px;width:228.8px;">RequireRolesAsyncAttribute.cs</span>
<svg class="a" style="left:1566.8px;top:647.0px;" width="7" height="12" viewBox="0 0 7 12"><path d="M0.8 0.9 L6 6 L0.8 11.1 Z" fill="none" stroke="#1e1e1e" stroke-width="1.3" stroke-linejoin="round"/></svg>
<svg class="a" style="left:1582.8px;top:649.3000000000001px;" width="8" height="9.6" viewBox="0 0 8 9.6"><path d="M2.3 4.4 V2.9 Q2.3 0.8 4 0.8 Q5.7 0.8 5.7 2.9 V4.4" fill="none" stroke="#1b7fd4" stroke-width="1.4"/><rect x="0.8" y="4.3" width="6.4" height="4.5" rx="0.6" fill="#dceaf8" stroke="#1b7fd4" stroke-width="1.5"/></svg>
<svg class="a" style="left:1595.6000000000001px;top:649.3px;" width="18" height="10" viewBox="0 0 18 10"><path d="M7.4 2.2 C6 0.6 3.2 0.7 1.9 2.5 C0.7 4.2 0.8 6.6 2.2 8 C3.6 9.4 6.2 9.2 7.4 7.8" fill="none" stroke="#3a9a45" stroke-width="2"/><path d="M11.6 0.3 L11 7.3 M15.2 0.3 L14.6 7.3 M9.6 2.3 H17.4 M9.2 5.3 H17" stroke="#3a9a45" stroke-width="1.5"/></svg>
<span class="a t" id="t65" style="left:1620.5px;top:643.6px;line-height:20px;font-size:15px;color:#1e1e1e;letter-spacing:0.682px;width:185.6px;">RequireRolesAttribute.cs</span>
<svg class="a" style="left:1566.8px;top:671.0px;" width="7" height="12" viewBox="0 0 7 12"><path d="M0.8 0.9 L6 6 L0.8 11.1 Z" fill="none" stroke="#1e1e1e" stroke-width="1.3" stroke-linejoin="round"/></svg>
<svg class="a" style="left:1583.5px;top:674.5px;" width="7.4" height="7.4" viewBox="0 0 7.4 7.4"><path d="M3.7 0 V7.4 M0 3.7 H7.4" stroke="#3a9a45" stroke-width="1.5"/></svg>
<svg class="a" style="left:1595.6000000000001px;top:673.3px;" width="18" height="10" viewBox="0 0 18 10"><path d="M7.4 2.2 C6 0.6 3.2 0.7 1.9 2.5 C0.7 4.2 0.8 6.6 2.2 8 C3.6 9.4 6.2 9.2 7.4 7.8" fill="none" stroke="#3a9a45" stroke-width="2"/><path d="M11.6 0.3 L11 7.3 M15.2 0.3 L14.6 7.3 M9.6 2.3 H17.4 M9.2 5.3 H17" stroke="#3a9a45" stroke-width="1.5"/></svg>
<span class="a t" id="t66" style="left:1620.5px;top:667.6px;line-height:20px;font-size:15px;color:#1e1e1e;letter-spacing:0.368px;width:217px;">ResponseCacheAsyncFilter.cs</span>
<svg class="a" style="left:1566.8px;top:695.0px;" width="7" height="12" viewBox="0 0 7 12"><path d="M0.8 0.9 L6 6 L0.8 11.1 Z" fill="none" stroke="#1e1e1e" stroke-width="1.3" stroke-linejoin="round"/></svg>
<svg class="a" style="left:1583.5px;top:698.5px;" width="7.4" height="7.4" viewBox="0 0 7.4 7.4"><path d="M3.7 0 V7.4 M0 3.7 H7.4" stroke="#3a9a45" stroke-width="1.5"/></svg>
<svg class="a" style="left:1595.6000000000001px;top:697.3px;" width="18" height="10" viewBox="0 0 18 10"><path d="M7.4 2.2 C6 0.6 3.2 0.7 1.9 2.5 C0.7 4.2 0.8 6.6 2.2 8 C3.6 9.4 6.2 9.2 7.4 7.8" fill="none" stroke="#3a9a45" stroke-width="2"/><path d="M11.6 0.3 L11 7.3 M15.2 0.3 L14.6 7.3 M9.6 2.3 H17.4 M9.2 5.3 H17" stroke="#3a9a45" stroke-width="1.5"/></svg>
<span class="a t" id="t67" style="left:1620.5px;top:691.6px;line-height:20px;font-size:15px;color:#1e1e1e;letter-spacing:0.353px;width:174px;">ResponseCacheFilter.cs</span>
<svg class="a" style="left:1566.8px;top:719.0px;" width="7" height="12" viewBox="0 0 7 12"><path d="M0.8 0.9 L6 6 L0.8 11.1 Z" fill="none" stroke="#1e1e1e" stroke-width="1.3" stroke-linejoin="round"/></svg>
<svg class="a" style="left:1582.8px;top:721.3000000000001px;" width="8" height="9.6" viewBox="0 0 8 9.6"><path d="M2.3 4.4 V2.9 Q2.3 0.8 4 0.8 Q5.7 0.8 5.7 2.9 V4.4" fill="none" stroke="#1b7fd4" stroke-width="1.4"/><rect x="0.8" y="4.3" width="6.4" height="4.5" rx="0.6" fill="#dceaf8" stroke="#1b7fd4" stroke-width="1.5"/></svg>
<svg class="a" style="left:1595.6000000000001px;top:721.3px;" width="18" height="10" viewBox="0 0 18 10"><path d="M7.4 2.2 C6 0.6 3.2 0.7 1.9 2.5 C0.7 4.2 0.8 6.6 2.2 8 C3.6 9.4 6.2 9.2 7.4 7.8" fill="none" stroke="#3a9a45" stroke-width="2"/><path d="M11.6 0.3 L11 7.3 M15.2 0.3 L14.6 7.3 M9.6 2.3 H17.4 M9.2 5.3 H17" stroke="#3a9a45" stroke-width="1.5"/></svg>
<span class="a t" id="t68" style="left:1620.5px;top:715.6px;line-height:20px;font-size:15px;color:#1e1e1e;letter-spacing:0.641px;width:132px;">ValidationFilter.cs</span>
<svg class="a" style="left:1543.8px;top:745.0px;" width="8.2" height="8.2" viewBox="0 0 8.2 8.2"><path d="M8.2 0 V8.2 H0 Z" fill="#1e1e1e"/></svg>
<svg class="a" style="left:1560.3999999999999px;top:745.3000000000001px;" width="8" height="9.6" viewBox="0 0 8 9.6"><path d="M2.3 4.4 V2.9 Q2.3 0.8 4 0.8 Q5.7 0.8 5.7 2.9 V4.4" fill="none" stroke="#1b7fd4" stroke-width="1.4"/><rect x="0.8" y="4.3" width="6.4" height="4.5" rx="0.6" fill="#dceaf8" stroke="#1b7fd4" stroke-width="1.5"/></svg>
<svg class="a" style="left:1572.5px;top:742.9px;" width="18.2" height="13" viewBox="0 0 18.2 13"><path d="M0.7 1.4 Q0.7 0.7 1.4 0.7 H7.6 L9.2 2.3 H16.8 Q17.5 2.3 17.5 3 V11.6 Q17.5 12.3 16.8 12.3 H1.4 Q0.7 12.3 0.7 11.6 Z" fill="#d9b870" stroke="#c09332" stroke-width="1.3" stroke-linejoin="round"/><path d="M0.8 3.9 H7.4 L9 2.5" fill="none" stroke="#c09332" stroke-width="1"/></svg>
<span class="a t" id="t69" style="left:1598.1px;top:739.6px;line-height:20px;font-size:15px;color:#1e1e1e;letter-spacing:1.042px;width:53.4px;">Helper</span>
<svg class="a" style="left:1566.8px;top:767.0px;" width="7" height="12" viewBox="0 0 7 12"><path d="M0.8 0.9 L6 6 L0.8 11.1 Z" fill="none" stroke="#1e1e1e" stroke-width="1.3" stroke-linejoin="round"/></svg>
<svg class="a" style="left:1582.8px;top:769.3000000000001px;" width="8" height="9.6" viewBox="0 0 8 9.6"><path d="M2.3 4.4 V2.9 Q2.3 0.8 4 0.8 Q5.7 0.8 5.7 2.9 V4.4" fill="none" stroke="#1b7fd4" stroke-width="1.4"/><rect x="0.8" y="4.3" width="6.4" height="4.5" rx="0.6" fill="#dceaf8" stroke="#1b7fd4" stroke-width="1.5"/></svg>
<svg class="a" style="left:1595.6000000000001px;top:769.3px;" width="18" height="10" viewBox="0 0 18 10"><path d="M7.4 2.2 C6 0.6 3.2 0.7 1.9 2.5 C0.7 4.2 0.8 6.6 2.2 8 C3.6 9.4 6.2 9.2 7.4 7.8" fill="none" stroke="#3a9a45" stroke-width="2"/><path d="M11.6 0.3 L11 7.3 M15.2 0.3 L14.6 7.3 M9.6 2.3 H17.4 M9.2 5.3 H17" stroke="#3a9a45" stroke-width="1.5"/></svg>
<span class="a t" id="t70" style="left:1620.5px;top:763.6px;line-height:20px;font-size:15px;color:#1e1e1e;letter-spacing:0.746px;width:141px;">JwtTokenHelper.cs</span>
<svg class="a" style="left:1544.3999999999999px;top:791.0px;" width="7" height="12" viewBox="0 0 7 12"><path d="M0.8 0.9 L6 6 L0.8 11.1 Z" fill="none" stroke="#1e1e1e" stroke-width="1.3" stroke-linejoin="round"/></svg>
<svg class="a" style="left:1560.3999999999999px;top:793.3000000000001px;" width="8" height="9.6" viewBox="0 0 8 9.6"><path d="M2.3 4.4 V2.9 Q2.3 0.8 4 0.8 Q5.7 0.8 5.7 2.9 V4.4" fill="none" stroke="#1b7fd4" stroke-width="1.4"/><rect x="0.8" y="4.3" width="6.4" height="4.5" rx="0.6" fill="#dceaf8" stroke="#1b7fd4" stroke-width="1.5"/></svg>
<svg class="a" style="left:1572.5px;top:790.9px;" width="18.2" height="13" viewBox="0 0 18.2 13"><path d="M0.7 1.4 Q0.7 0.7 1.4 0.7 H7.6 L9.2 2.3 H16.8 Q17.5 2.3 17.5 3 V11.6 Q17.5 12.3 16.8 12.3 H1.4 Q0.7 12.3 0.7 11.6 Z" fill="#d9b870" stroke="#c09332" stroke-width="1.3" stroke-linejoin="round"/><path d="M0.8 3.9 H7.4 L9 2.5" fill="none" stroke="#c09332" stroke-width="1"/></svg>
<span class="a t" id="t71" style="left:1598.1px;top:787.6px;line-height:20px;font-size:15px;color:#1e1e1e;letter-spacing:1.033px;width:90px;">Middleware</span>
<svg class="a" style="left:1544.3999999999999px;top:815.0px;" width="7" height="12" viewBox="0 0 7 12"><path d="M0.8 0.9 L6 6 L0.8 11.1 Z" fill="none" stroke="#1e1e1e" stroke-width="1.3" stroke-linejoin="round"/></svg>
<svg class="a" style="left:1560.7999999999997px;top:819.55px;" width="8.4" height="6.4" viewBox="0 0 8.4 6.4"><path d="M0.5 3.4 L2.9 5.7 L7.9 0.6" fill="none" stroke="#d8334a" stroke-width="1.5"/></svg>
<svg class="a" style="left:1574.8px;top:813.8px;" width="15.4" height="16.4" viewBox="0 0 15.4 16.4"><path d="M0.8 1.8 Q0.8 0.8 1.8 0.8 H9.6 L14.4 5.6 V14.6 Q14.4 15.6 13.4 15.6 H1.8 Q0.8 15.6 0.8 14.6 Z" fill="#f2f2f2" stroke="#6a6a6a" stroke-width="1.4"/><path d="M6 6.6 Q4.6 6.6 4.6 8 V9 Q4.6 10 3.5 10 Q4.6 10 4.6 11 V12 Q4.6 13.4 6 13.4 M9.2 6.6 Q10.6 6.6 10.6 8 V9 Q10.6 10 11.7 10 Q10.6 10 10.6 11 V12 Q10.6 13.4 9.2 13.4" fill="none" stroke="#3a3a3a" stroke-width="1.3"/></svg>
<span class="a t" id="t72" style="left:1598.1px;top:811.6px;line-height:20px;font-size:15px;color:#1e1e1e;letter-spacing:0.726px;width:123.3px;">appsettings.json</span>
<svg class="a" style="left:1560.3999999999999px;top:841.3000000000001px;" width="8" height="9.6" viewBox="0 0 8 9.6"><path d="M2.3 4.4 V2.9 Q2.3 0.8 4 0.8 Q5.7 0.8 5.7 2.9 V4.4" fill="none" stroke="#1b7fd4" stroke-width="1.4"/><rect x="0.8" y="4.3" width="6.4" height="4.5" rx="0.6" fill="#dceaf8" stroke="#1b7fd4" stroke-width="1.5"/></svg>
<svg class="a" style="left:1571.8px;top:836.6px;" width="20" height="20" viewBox="0 0 20 20"><path d="M7.6 6 V2.8 Q7.6 1.2 9.2 1.2 H17.6 Q19 1.2 19 2.6 V5.6 H15.6 V14.8 H12" fill="#d6d6da" stroke="#4a4a4a" stroke-width="1.2"/><circle cx="6.6" cy="13.3" r="6.1" fill="#1b7fd4"/><path d="M0.8 13.3 H12.4 M6.6 7.4 V19.2 M6.6 7.6 C3.4 10 3.4 16.6 6.6 19 M6.6 7.6 C9.8 10 9.8 16.6 6.6 19 M1.6 10.4 H11.6 M1.6 16.2 H11.6" fill="none" stroke="#eaf3fc" stroke-width="0.9"/></svg>
<span class="a t" id="t73" style="left:1598.1px;top:835.6px;line-height:20px;font-size:15px;color:#1e1e1e;letter-spacing:0.623px;width:149.2px;">Peng.Study.API.http</span>
<svg class="a" style="left:1544.3999999999999px;top:863.0px;" width="7" height="12" viewBox="0 0 7 12"><path d="M0.8 0.9 L6 6 L0.8 11.1 Z" fill="none" stroke="#1e1e1e" stroke-width="1.3" stroke-linejoin="round"/></svg>
<svg class="a" style="left:1560.7999999999997px;top:867.55px;" width="8.4" height="6.4" viewBox="0 0 8.4 6.4"><path d="M0.5 3.4 L2.9 5.7 L7.9 0.6" fill="none" stroke="#d8334a" stroke-width="1.5"/></svg>
<svg class="a" style="left:1573.2px;top:865.3px;" width="18" height="10" viewBox="0 0 18 10"><path d="M7.4 2.2 C6 0.6 3.2 0.7 1.9 2.5 C0.7 4.2 0.8 6.6 2.2 8 C3.6 9.4 6.2 9.2 7.4 7.8" fill="none" stroke="#3a9a45" stroke-width="2"/><path d="M11.6 0.3 L11 7.3 M15.2 0.3 L14.6 7.3 M9.6 2.3 H17.4 M9.2 5.3 H17" stroke="#3a9a45" stroke-width="1.5"/></svg>
<span class="a t" id="t74" style="left:1598.1px;top:859.6px;line-height:20px;font-size:15px;color:#1e1e1e;letter-spacing:0.524px;width:85.4px;">Program.cs</span>
<svg class="a" style="left:1544.3999999999999px;top:887.0px;" width="7" height="12" viewBox="0 0 7 12"><path d="M0.8 0.9 L6 6 L0.8 11.1 Z" fill="none" stroke="#1e1e1e" stroke-width="1.3" stroke-linejoin="round"/></svg>
<svg class="a" style="left:1560.3999999999999px;top:889.3000000000001px;" width="8" height="9.6" viewBox="0 0 8 9.6"><path d="M2.3 4.4 V2.9 Q2.3 0.8 4 0.8 Q5.7 0.8 5.7 2.9 V4.4" fill="none" stroke="#1b7fd4" stroke-width="1.4"/><rect x="0.8" y="4.3" width="6.4" height="4.5" rx="0.6" fill="#dceaf8" stroke="#1b7fd4" stroke-width="1.5"/></svg>
<svg class="a" style="left:1573.2px;top:889.3px;" width="18" height="10" viewBox="0 0 18 10"><path d="M7.4 2.2 C6 0.6 3.2 0.7 1.9 2.5 C0.7 4.2 0.8 6.6 2.2 8 C3.6 9.4 6.2 9.2 7.4 7.8" fill="none" stroke="#3a9a45" stroke-width="2"/><path d="M11.6 0.3 L11 7.3 M15.2 0.3 L14.6 7.3 M9.6 2.3 H17.4 M9.2 5.3 H17" stroke="#3a9a45" stroke-width="1.5"/></svg>
<span class="a t" id="t75" style="left:1598.1px;top:883.6px;line-height:20px;font-size:15px;color:#1e1e1e;letter-spacing:0.491px;width:146.3px;">WeatherForecast.cs</span>
<svg class="a" style="left:1522.1px;top:911.0px;" width="7" height="12" viewBox="0 0 7 12"><path d="M0.8 0.9 L6 6 L0.8 11.1 Z" fill="none" stroke="#1e1e1e" stroke-width="1.3" stroke-linejoin="round"/></svg>
<svg class="a" style="left:1538.1px;top:913.3000000000001px;" width="8" height="9.6" viewBox="0 0 8 9.6"><path d="M2.3 4.4 V2.9 Q2.3 0.8 4 0.8 Q5.7 0.8 5.7 2.9 V4.4" fill="none" stroke="#1b7fd4" stroke-width="1.4"/><rect x="0.8" y="4.3" width="6.4" height="4.5" rx="0.6" fill="#dceaf8" stroke="#1b7fd4" stroke-width="1.5"/></svg>
<svg class="a" style="left:1549.3px;top:908.6px;" width="21" height="20" viewBox="0 0 21 20"><path d="M3.8 3 Q3.8 1.6 5.2 1.6 H18.6 Q20 1.6 20 3 V14.4 Q20 15.2 19.2 15.2 H12" fill="#dcdce0" stroke="#4a4a4a" stroke-width="1.2"/><path d="M3.8 3.6 H20" stroke="#3a3a3a" stroke-width="2.4"/><circle cx="6.6" cy="13.3" r="6.1" fill="#1b7fd4"/><path d="M0.8 13.3 H12.4 M6.6 7.4 V19.2 M6.6 7.6 C3.4 10 3.4 16.6 6.6 19 M6.6 7.6 C9.8 10 9.8 16.6 6.6 19 M1.6 10.4 H11.6 M1.6 16.2 H11.6" fill="none" stroke="#eaf3fc" stroke-width="0.9"/></svg>
<span class="a t" id="t76" style="left:1575.8px;top:907.6px;line-height:20px;font-size:15px;color:#1e1e1e;letter-spacing:0.907px;width:129px;">WebApplication1</span>
<div class="a" style="left:1864.1px;top:311px;width:10.8px;height:604.5px;background:#c2c3c9;"></div>
<svg class="a" style="left:1864px;top:217.5px;" width="11" height="7" viewBox="0 0 11 7"><path d="M0 7 L5.5 0.6 L11 7 Z" fill="#868999"/></svg>
<svg class="a" style="left:1864px;top:922.5px;" width="11" height="7" viewBox="0 0 11 7"><path d="M0 0 L5.5 6.4 L11 0 Z" fill="#868999"/></svg>
<div class="a" style="left:1508px;top:936px;width:149px;height:25px;background:#f5f5f5;border:1px solid #cccedb;border-top:none;"></div>
<span class="a t" id="t77" style="left:1515px;top:938.8px;line-height:20px;font-size:15px;color:#0e70c0;letter-spacing:0.000px;width:139px;">解决方案资源管理器</span>
<span class="a t" id="t78" style="left:1664.8px;top:938.8px;line-height:20px;font-size:15px;color:#1e1e1e;letter-spacing:0.171px;width:58.2px;">Git 更改</span>
<span class="a t" id="t79" style="left:1732.8px;top:938.8px;line-height:20px;font-size:15px;color:#1e1e1e;letter-spacing:0.200px;width:34.2px;">属性</span>
<div class="a" style="left:1912.6px;top:117.5px;width:7.4px;height:60.5px;background:#d5d7e3;"></div>
<span class="a t" style="left:1906.5px;top:119px;line-height:18px;font-size:15px;color:#1e1e1e;transform-origin:0 0;transform:rotate(90deg);letter-spacing:-0.2px;">诊断工具</span>
<div class="a" style="left:1889.5px;top:181.5px;width:17px;height:1px;background:#eeeef2;"></div>
<span class="a t" id="t80" style="left:8px;top:968.5px;line-height:20px;font-size:15px;color:#1e1e1e;letter-spacing:0.000px;width:64px;">调用堆栈</span>
<div class="a" style="left:8px;top:992.1px;width:60px;height:7.6px;background:#cccedb;"></div>
<span class="a t" id="t81" style="left:83px;top:968.5px;line-height:20px;font-size:15px;color:#1e1e1e;letter-spacing:0.000px;width:34px;">断点</span>
<div class="a" style="left:83px;top:992.1px;width:30px;height:7.6px;background:#cccedb;"></div>
<span class="a t" id="t82" style="left:128px;top:968.5px;line-height:20px;font-size:15px;color:#1e1e1e;letter-spacing:0.000px;width:64px;">异常设置</span>
<div class="a" style="left:128px;top:992.1px;width:60px;height:7.6px;background:#cccedb;"></div>
<span class="a t" id="t83" style="left:203px;top:968.5px;line-height:20px;font-size:15px;color:#1e1e1e;letter-spacing:0.000px;width:64px;">命令窗口</span>
<div class="a" style="left:203px;top:992.1px;width:60px;height:7.6px;background:#cccedb;"></div>
<span class="a t" id="t84" style="left:278px;top:968.5px;line-height:20px;font-size:15px;color:#1e1e1e;letter-spacing:0.000px;width:64px;">即时窗口</span>
<div class="a" style="left:278px;top:992.1px;width:60px;height:7.6px;background:#cccedb;"></div>
<span class="a t" id="t85" style="left:353px;top:968.5px;line-height:20px;font-size:15px;color:#1e1e1e;letter-spacing:0.000px;width:34px;">输出</span>
<div class="a" style="left:353px;top:992.1px;width:30px;height:7.6px;background:#cccedb;"></div>
<span class="a t" id="t86" style="left:398px;top:969.0px;line-height:20px;font-size:15px;color:#1e1e1e;letter-spacing:0.516px;width:76px;">CodeLens</span>
<div class="a" style="left:398px;top:992.1px;width:72px;height:7.6px;background:#cccedb;"></div>
<span class="a t" id="t87" style="left:485px;top:968.5px;line-height:20px;font-size:15px;color:#1e1e1e;letter-spacing:0.000px;width:64px;">自动窗口</span>
<div class="a" style="left:485px;top:992.1px;width:60px;height:7.6px;background:#cccedb;"></div>
<span class="a t" id="t88" style="left:560px;top:968.5px;line-height:20px;font-size:15px;color:#1e1e1e;letter-spacing:0.000px;width:64px;">局部变量</span>
<div class="a" style="left:560px;top:992.1px;width:60px;height:7.6px;background:#cccedb;"></div>
<span class="a t" id="t89" style="left:635px;top:968.5px;line-height:20px;font-size:15px;color:#1e1e1e;letter-spacing:-0.172px;width:46px;">监视 1</span>
<div class="a" style="left:635px;top:992.1px;width:42px;height:7.6px;background:#cccedb;"></div>
<div class="a" style="left:0px;top:999.5px;width:1920px;height:30.5px;background:#ca5100;"></div>
<svg class="a" style="left:5px;top:1005px;" width="21" height="21" viewBox="0 0 21 21"><path d="M1 2 Q1 1 2 1 H18 Q19 1 19 2 V14 Q19 15 18 15 H13 L10 18.6 L7 15 H2 Q1 15 1 14 Z" fill="#d4651e" stroke="#fff" stroke-width="1.5" stroke-linejoin="round"/></svg>
<span class="a t" id="t90" style="left:35px;top:1006.1px;line-height:20px;font-size:15px;color:#ffffff;letter-spacing:-1.000px;width:33px;">就绪</span>
<svg class="a" style="left:1417px;top:1006px;" width="16" height="18" viewBox="0 0 16 18"><path d="M4 17 V1.6 M0.8 4.8 L4 1.4 L7.2 4.8 M12 1 V16.4 M8.8 13.2 L12 16.6 L15.2 13.2" fill="none" stroke="#fff" stroke-width="1.4"/></svg>
<span class="a t" id="t91" style="left:1442px;top:1005.6px;line-height:20px;font-size:15px;color:#ffffff;letter-spacing:0.703px;width:36px;">0 / 0</span>
<svg class="a" style="left:1483px;top:1011px;" width="10" height="6" viewBox="0 0 10 6"><path d="M0 6 L5 0.4 L10 6 Z" fill="#fff"/></svg>
<svg class="a" style="left:1521px;top:1006px;" width="17" height="17" viewBox="0 0 17 17"><path d="M1.4 15.6 L2.6 11 L11.6 2 Q13 0.8 14.6 2.4 Q16.2 4 15 5.4 L6 14.4 Z M10.4 3.4 L13.6 6.6" fill="none" stroke="#fff" stroke-width="1.3" stroke-linejoin="round"/></svg>
<span class="a t" id="t92" style="left:1546px;top:1005.6px;line-height:20px;font-size:15px;color:#ffffff;letter-spacing:1.312px;width:22px;">60</span>
<svg class="a" style="left:1593px;top:1005px;" width="19" height="20" viewBox="0 0 19 20"><circle cx="4" cy="3.6" r="2.6" fill="none" stroke="#fff" stroke-width="1.4"/><circle cx="4" cy="16" r="2.6" fill="none" stroke="#fff" stroke-width="1.4"/><circle cx="13.6" cy="3.6" r="2.6" fill="none" stroke="#fff" stroke-width="1.4"/><path d="M4 6.2 V13.4 M13.6 6.2 Q13.6 10 4.4 11.6" fill="none" stroke="#fff" stroke-width="1.4"/><circle cx="13.4" cy="14.6" r="4.4" fill="#fff"/><path d="M13.4 17.2 V12.4 M11.4 14.2 L13.4 12.2 L15.4 14.2" fill="none" stroke="#ca5100" stroke-width="1.2"/></svg>
<span class="a t" id="t93" style="left:1618px;top:1005.6px;line-height:20px;font-size:15px;color:#ffffff;letter-spacing:0.831px;width:54px;">master</span>
<svg class="a" style="left:1676px;top:1011px;" width="10" height="6" viewBox="0 0 10 6"><path d="M0 6 L5 0.4 L10 6 Z" fill="#fff"/></svg>
<svg class="a" style="left:1722px;top:1005px;" width="21" height="20" viewBox="0 0 21 20"><path d="M1 1.4 H17.6 V5 H1 Z M2.6 5 V16.6 H9 M16 5 V8.6 M6.4 8.6 V11 H11 V8.6" fill="none" stroke="#fff" stroke-width="1.4" stroke-linejoin="round"/><circle cx="15" cy="14.6" r="4.6" fill="#fff"/><path d="M15 17.4 V12.4 M13 14.2 L15 12.2 L17 14.2" fill="none" stroke="#ca5100" stroke-width="1.2"/></svg>
<span class="a t" id="t94" style="left:1748px;top:1005.6px;line-height:20px;font-size:15px;color:#ffffff;letter-spacing:0.974px;width:92px;">peng-eshop</span>
<svg class="a" style="left:1844px;top:1011px;" width="10" height="6" viewBox="0 0 10 6"><path d="M0 6 L5 0.4 L10 6 Z" fill="#fff"/></svg>
<svg class="a" style="left:1881px;top:1004px;" width="26" height="26" viewBox="0 0 26 26"><path d="M3 15.6 C5.4 13.6 4.6 10 5.4 7 C6.2 4 8 2 10.6 2 C13.2 2 15 4 15.6 6.6" fill="#d4651e" stroke="#fff" stroke-width="1.4"/><path d="M3 15.8 H9.6 M8 18.4 Q10 20 11 18.6" fill="none" stroke="#fff" stroke-width="1.4"/><circle cx="16.4" cy="17.6" r="7.8" fill="#fff"/></svg>
<span class="a t" id="t95" style="left:1893.6px;top:1013.8px;line-height:16px;font-size:15px;color:#1e1e1e;width:11px;">1</span>
</body></html>
